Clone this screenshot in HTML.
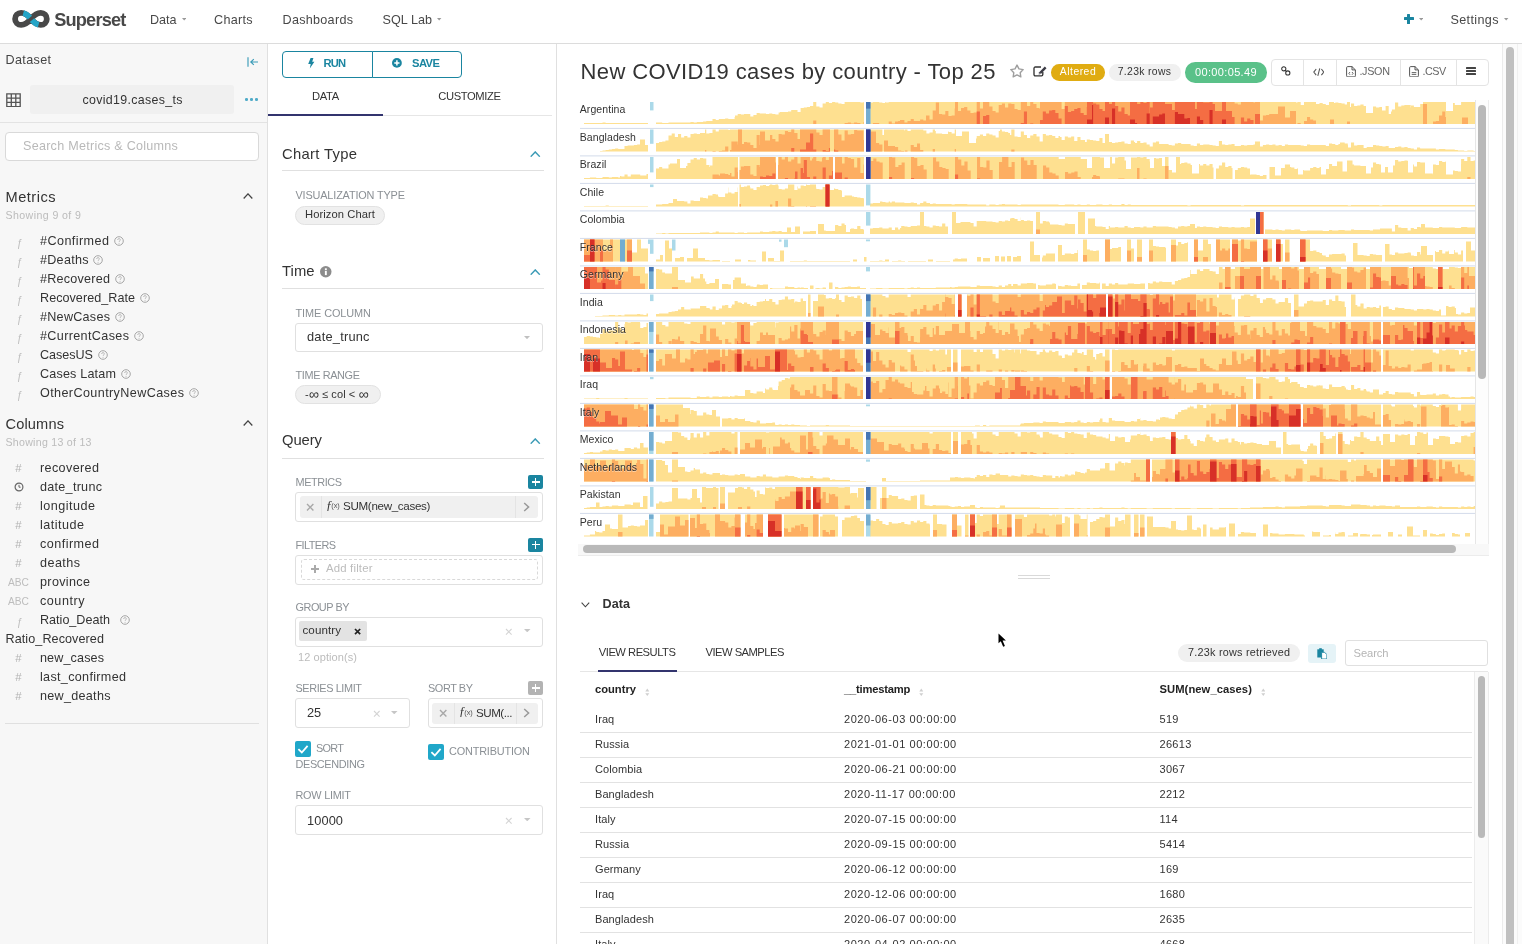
<!DOCTYPE html>
<html lang="en"><head><meta charset="utf-8"><title>Explore - New COVID19 cases by country - Top 25</title><style>
*{box-sizing:border-box;margin:0;padding:0}
html,body{width:1522px;height:944px;overflow:hidden;background:#fff}
body{font-family:"Liberation Sans",sans-serif;position:relative;color:#333}
#bg{position:absolute;left:0;top:0;width:1522px;height:944px}
#root{position:absolute;left:0;top:0;width:1522px;height:944px;opacity:.999;will-change:opacity}
.b{position:absolute;display:block}
.t{position:absolute;display:block;line-height:1;white-space:pre}
.lbl{text-shadow:0 1px 0 rgba(255,255,255,.5)}
</style></head><body><div id="bg">
<div class="b" style="left:0.00px;top:0.00px;width:1522.00px;height:43.00px;background:#fff"></div>
<div class="b" style="left:0.00px;top:43.00px;width:1522.00px;height:1.00px;background:#dcdcdc"></div>
<svg class="b" style="left:11.90px;top:9.90px;" width="37.90" height="17.80" viewBox="0 0 37.9 17.8"><path d="M18.950 8.900C15.500 4.700 12.500 2.900 9.100 2.900A6 6 0 1 0 9.100 14.900C12.500 14.900 15.500 13.100 18.950 8.900C22.400 4.700 25.400 2.900 28.800 2.900A6 6 0 1 1 28.800 14.900C25.400 14.900 22.400 13.100 18.950 8.900Z" fill="none" stroke="#484848" stroke-width="5.800"/>
<path d="M11.300 3C13.800 3.700 16 5.400 17.900 7.600" fill="none" stroke="#25a5c7" stroke-width="5.800"/>
<path d="M20 10.200C21.900 12.400 24.100 14.100 26.600 14.800" fill="none" stroke="#25a5c7" stroke-width="5.800"/></svg>
<svg class="b" style="left:182.00px;top:18.20px;" width="4.40" height="2.40" viewBox="0 0 4.4 2.4"><path d="M0 0H4.4 L2.2 2.4 Z" fill="#999"/></svg>
<svg class="b" style="left:437.40px;top:18.20px;" width="4.40" height="2.40" viewBox="0 0 4.4 2.4"><path d="M0 0H4.4 L2.2 2.4 Z" fill="#999"/></svg>
<svg class="b" style="left:1419.00px;top:18.20px;" width="4.40" height="2.40" viewBox="0 0 4.4 2.4"><path d="M0 0H4.4 L2.2 2.4 Z" fill="#999"/></svg>
<svg class="b" style="left:1504.20px;top:18.20px;" width="4.40" height="2.40" viewBox="0 0 4.4 2.4"><path d="M0 0H4.4 L2.2 2.4 Z" fill="#999"/></svg>
<div class="b" style="left:1404.00px;top:17.40px;width:9.80px;height:3.00px;background:#1a85a0;border-radius:.5px"></div>
<div class="b" style="left:1407.40px;top:14.00px;width:3.00px;height:9.80px;background:#1a85a0;border-radius:.5px"></div>
<div class="b" style="left:0.00px;top:44.00px;width:267.00px;height:900.00px;background:#f7f7f7"></div>
<div class="b" style="left:267.00px;top:44.00px;width:1.00px;height:900.00px;background:#e0e0e0"></div>
<svg class="b" style="left:246.60px;top:57.00px;" width="12.00" height="10.00" viewBox="0 0 12 10"><path d="M1 .3v9.400M3.800 5h7.200M6.800 2.200L3.800 5l3 2.800" fill="none" stroke="#3b9cb8" stroke-width="1.150"/></svg>
<svg class="b" style="left:6.00px;top:92.50px;" width="15.00" height="14.50" viewBox="0 0 15 14.5"><path d="M.8 .8h13.400v12.900H.8zM.8 5.100h13.400M.8 9.400h13.400M5.300 .8v12.900M9.800 .8v12.900" fill="none" stroke="#555" stroke-width="1.300"/></svg>
<div class="b" style="left:30.00px;top:85.00px;width:204.00px;height:29.00px;background:#f0f0f0;border-radius:3px"></div>
<div class="b" style="left:245.20px;top:98.30px;width:2.50px;height:2.50px;background:#4fabc8;border-radius:1.3px"></div>
<div class="b" style="left:250.20px;top:98.30px;width:2.50px;height:2.50px;background:#4fabc8;border-radius:1.3px"></div>
<div class="b" style="left:255.20px;top:98.30px;width:2.50px;height:2.50px;background:#4fabc8;border-radius:1.3px"></div>
<div class="b" style="left:0.00px;top:122.00px;width:267.00px;height:1.00px;background:#e3e3e3"></div>
<div class="b" style="left:5.30px;top:132.00px;width:254.20px;height:28.70px;background:#fff;border:1px solid #d9d9d9;border-radius:4px"></div>
<svg class="b" style="left:242.50px;top:193.00px;" width="10.00" height="6.00" viewBox="0 0 10 6"><path d="M.7 5.5 L5 .9 L9.3 5.5" fill="none" stroke="#444" stroke-width="1.3"/></svg>
<svg class="b" style="left:113.50px;top:236.10px;" width="10.00" height="10.00" viewBox="0 0 10 10"><circle cx="5" cy="5" r="4.300" fill="none" stroke="#a6a6a6" stroke-width="1"/><path d="M3.600 4c0-.9.600-1.400 1.400-1.400s1.400.5 1.400 1.200c0 1-1.300 1-1.300 2.100" fill="none" stroke="#b5b5b5" stroke-width=".9"/><circle cx="5.050" cy="7.300" r=".55" fill="#b5b5b5"/></svg>
<svg class="b" style="left:93.00px;top:255.10px;" width="10.00" height="10.00" viewBox="0 0 10 10"><circle cx="5" cy="5" r="4.300" fill="none" stroke="#a6a6a6" stroke-width="1"/><path d="M3.600 4c0-.9.600-1.400 1.400-1.400s1.400.5 1.400 1.200c0 1-1.300 1-1.300 2.100" fill="none" stroke="#b5b5b5" stroke-width=".9"/><circle cx="5.050" cy="7.300" r=".55" fill="#b5b5b5"/></svg>
<svg class="b" style="left:114.50px;top:274.10px;" width="10.00" height="10.00" viewBox="0 0 10 10"><circle cx="5" cy="5" r="4.300" fill="none" stroke="#a6a6a6" stroke-width="1"/><path d="M3.600 4c0-.9.600-1.400 1.400-1.400s1.400.5 1.400 1.200c0 1-1.300 1-1.300 2.100" fill="none" stroke="#b5b5b5" stroke-width=".9"/><circle cx="5.050" cy="7.300" r=".55" fill="#b5b5b5"/></svg>
<svg class="b" style="left:139.50px;top:293.10px;" width="10.00" height="10.00" viewBox="0 0 10 10"><circle cx="5" cy="5" r="4.300" fill="none" stroke="#a6a6a6" stroke-width="1"/><path d="M3.600 4c0-.9.600-1.400 1.400-1.400s1.400.5 1.400 1.200c0 1-1.300 1-1.300 2.100" fill="none" stroke="#b5b5b5" stroke-width=".9"/><circle cx="5.050" cy="7.300" r=".55" fill="#b5b5b5"/></svg>
<svg class="b" style="left:114.50px;top:312.10px;" width="10.00" height="10.00" viewBox="0 0 10 10"><circle cx="5" cy="5" r="4.300" fill="none" stroke="#a6a6a6" stroke-width="1"/><path d="M3.600 4c0-.9.600-1.400 1.400-1.400s1.400.5 1.400 1.200c0 1-1.300 1-1.300 2.100" fill="none" stroke="#b5b5b5" stroke-width=".9"/><circle cx="5.050" cy="7.300" r=".55" fill="#b5b5b5"/></svg>
<svg class="b" style="left:133.50px;top:331.10px;" width="10.00" height="10.00" viewBox="0 0 10 10"><circle cx="5" cy="5" r="4.300" fill="none" stroke="#a6a6a6" stroke-width="1"/><path d="M3.600 4c0-.9.600-1.400 1.400-1.400s1.400.5 1.400 1.200c0 1-1.300 1-1.300 2.100" fill="none" stroke="#b5b5b5" stroke-width=".9"/><circle cx="5.050" cy="7.300" r=".55" fill="#b5b5b5"/></svg>
<svg class="b" style="left:97.50px;top:350.10px;" width="10.00" height="10.00" viewBox="0 0 10 10"><circle cx="5" cy="5" r="4.300" fill="none" stroke="#a6a6a6" stroke-width="1"/><path d="M3.600 4c0-.9.600-1.400 1.400-1.400s1.400.5 1.400 1.200c0 1-1.300 1-1.300 2.100" fill="none" stroke="#b5b5b5" stroke-width=".9"/><circle cx="5.050" cy="7.300" r=".55" fill="#b5b5b5"/></svg>
<svg class="b" style="left:120.50px;top:369.10px;" width="10.00" height="10.00" viewBox="0 0 10 10"><circle cx="5" cy="5" r="4.300" fill="none" stroke="#a6a6a6" stroke-width="1"/><path d="M3.600 4c0-.9.600-1.400 1.400-1.400s1.400.5 1.400 1.200c0 1-1.300 1-1.300 2.100" fill="none" stroke="#b5b5b5" stroke-width=".9"/><circle cx="5.050" cy="7.300" r=".55" fill="#b5b5b5"/></svg>
<svg class="b" style="left:188.50px;top:388.10px;" width="10.00" height="10.00" viewBox="0 0 10 10"><circle cx="5" cy="5" r="4.300" fill="none" stroke="#a6a6a6" stroke-width="1"/><path d="M3.600 4c0-.9.600-1.400 1.400-1.400s1.400.5 1.400 1.200c0 1-1.300 1-1.300 2.100" fill="none" stroke="#b5b5b5" stroke-width=".9"/><circle cx="5.050" cy="7.300" r=".55" fill="#b5b5b5"/></svg>
<svg class="b" style="left:242.50px;top:420.00px;" width="10.00" height="6.00" viewBox="0 0 10 6"><path d="M.7 5.5 L5 .9 L9.3 5.5" fill="none" stroke="#444" stroke-width="1.3"/></svg>
<svg class="b" style="left:13.50px;top:482.30px;" width="10.00" height="10.00" viewBox="0 0 10 10"><circle cx="5" cy="5" r="3.900" fill="none" stroke="#666" stroke-width="1.200"/><path d="M5 2.800V5.200H6.600" fill="none" stroke="#666" stroke-width="1"/></svg>
<svg class="b" style="left:119.50px;top:615.30px;" width="10.00" height="10.00" viewBox="0 0 10 10"><circle cx="5" cy="5" r="4.300" fill="none" stroke="#a6a6a6" stroke-width="1"/><path d="M3.600 4c0-.9.600-1.400 1.400-1.400s1.400.5 1.400 1.200c0 1-1.300 1-1.300 2.100" fill="none" stroke="#b5b5b5" stroke-width=".9"/><circle cx="5.050" cy="7.300" r=".55" fill="#b5b5b5"/></svg>
<div class="b" style="left:5.00px;top:722.50px;width:254.00px;height:1.00px;background:#e0e0e0"></div>
<div class="b" style="left:556.00px;top:44.00px;width:1.00px;height:900.00px;background:#e0e0e0"></div>
<div class="b" style="left:282.00px;top:51.00px;width:90.50px;height:27.00px;border:1px solid #1a85a0;border-radius:4px 0 0 4px;background:#fff"></div>
<div class="b" style="left:371.50px;top:51.00px;width:90.50px;height:27.00px;border:1px solid #1a85a0;border-radius:0 4px 4px 0;background:#fff"></div>
<svg class="b" style="left:308.00px;top:58.00px;" width="6.50" height="10.50" viewBox="0 0 6.5 10.5"><path d="M2.600 0H5.400L4.200 3.700H6.400L1.800 10.500 2.700 5.900H.2z" fill="#1a85a0"/></svg>
<svg class="b" style="left:392.40px;top:58.20px;" width="9.80" height="9.80" viewBox="0 0 9.8 9.8"><circle cx="4.900" cy="4.900" r="4.900" fill="#1a85a0"/><path d="M4.900 2.300v5.200M2.300 4.900h5.200" stroke="#fff" stroke-width="1.500"/></svg>
<div class="b" style="left:268.00px;top:115.00px;width:284.00px;height:1.00px;background:#e6e6e6"></div>
<div class="b" style="left:268.00px;top:114.00px;width:114.50px;height:2.00px;background:#32346e"></div>
<svg class="b" style="left:530.00px;top:151.20px;" width="10.50" height="6.20" viewBox="0 0 10.5 6.2"><path d="M.7 5.7 L5.25 .9 L9.8 5.7" fill="none" stroke="#3a9ab5" stroke-width="1.4"/></svg>
<div class="b" style="left:282.00px;top:170.00px;width:262.00px;height:1.00px;background:#e0e0e0"></div>
<svg class="b" style="left:530.00px;top:268.70px;" width="10.50" height="6.20" viewBox="0 0 10.5 6.2"><path d="M.7 5.7 L5.25 .9 L9.8 5.7" fill="none" stroke="#3a9ab5" stroke-width="1.4"/></svg>
<div class="b" style="left:282.00px;top:287.50px;width:262.00px;height:1.00px;background:#e0e0e0"></div>
<svg class="b" style="left:530.00px;top:437.70px;" width="10.50" height="6.20" viewBox="0 0 10.5 6.2"><path d="M.7 5.7 L5.25 .9 L9.8 5.7" fill="none" stroke="#3a9ab5" stroke-width="1.4"/></svg>
<div class="b" style="left:282.00px;top:457.50px;width:262.00px;height:1.00px;background:#e0e0e0"></div>
<svg class="b" style="left:320.00px;top:266.00px;" width="11.50" height="11.50" viewBox="0 0 11.5 11.5"><circle cx="5.750" cy="5.750" r="5.750" fill="#8c8c8c"/><rect x="4.900" y="4.800" width="1.900" height="4.300" fill="#fff"/><rect x="4.900" y="2.300" width="1.900" height="1.700" fill="#fff"/></svg>
<div class="b" style="left:295.00px;top:205.50px;width:89.50px;height:19.00px;background:#f0f0f0;border:1px solid #e2e2e2;border-radius:9.5px"></div>
<div class="b" style="left:295.00px;top:323.00px;width:248.00px;height:28.50px;background:#fff;border:1px solid #e0e0e0;border-radius:3px"></div>
<svg class="b" style="left:523.50px;top:335.50px;" width="6.00" height="3.20" viewBox="0 0 6 3.2"><path d="M0 0H6 L3 3.2 Z" fill="#c0c0c0"/></svg>
<div class="b" style="left:295.00px;top:385.00px;width:86.00px;height:19.00px;background:#f0f0f0;border:1px solid #e2e2e2;border-radius:9.5px"></div>
<div class="b" style="left:528.00px;top:475.00px;width:15.00px;height:14.00px;background:#1a85a0;border-radius:2px"></div>
<div class="b" style="left:531.50px;top:481.30px;width:8.00px;height:1.40px;background:#fff"></div>
<div class="b" style="left:534.80px;top:478.00px;width:1.40px;height:8.00px;background:#fff"></div>
<div class="b" style="left:295.00px;top:491.50px;width:248.00px;height:30.00px;background:#fff;border:1px solid #e0e0e0;border-radius:3px"></div>
<div class="b" style="left:300.00px;top:496.00px;width:237.50px;height:21.50px;background:#f0f0f0;border-radius:3px"></div>
<div class="b" style="left:321.00px;top:496.00px;width:1.00px;height:21.50px;background:#e4e4e4"></div>
<div class="b" style="left:515.00px;top:496.00px;width:1.00px;height:21.50px;background:#e4e4e4"></div>
<svg class="b" style="left:306.30px;top:502.80px;" width="8.40" height="8.40" viewBox="0 0 8.4 8.4"><path d="M1 1L7.4 7.4M7.4 1L1 7.4" stroke="#a8a8a8" stroke-width="1.4" fill="none"/></svg>
<svg class="b" style="left:523.00px;top:502.00px;" width="7.00" height="10.00" viewBox="0 0 7 10"><path d="M1.200 1L5.600 5 1.200 9" fill="none" stroke="#999" stroke-width="1.500"/></svg>
<div class="b" style="left:528.00px;top:537.50px;width:15.00px;height:14.00px;background:#1a85a0;border-radius:2px"></div>
<div class="b" style="left:531.50px;top:543.80px;width:8.00px;height:1.40px;background:#fff"></div>
<div class="b" style="left:534.80px;top:540.50px;width:1.40px;height:8.00px;background:#fff"></div>
<div class="b" style="left:295.00px;top:554.50px;width:248.00px;height:30.00px;background:#fff;border:1px solid #e0e0e0;border-radius:3px"></div>
<div class="b" style="left:300.50px;top:559.00px;width:237.00px;height:20.50px;border:1px dashed #d9d9d9;border-radius:3px"></div>
<div class="b" style="left:311.00px;top:568.30px;width:8.00px;height:1.40px;background:#aaa"></div>
<div class="b" style="left:314.30px;top:565.00px;width:1.40px;height:8.00px;background:#aaa"></div>
<div class="b" style="left:295.00px;top:616.50px;width:248.00px;height:30.00px;background:#fff;border:1px solid #e0e0e0;border-radius:3px"></div>
<div class="b" style="left:299.00px;top:621.00px;width:68.00px;height:20.00px;background:#e3e3e3;border-radius:2px"></div>
<svg class="b" style="left:354.20px;top:627.90px;" width="7.20" height="7.20" viewBox="0 0 7.2 7.2"><path d="M1 1L6.2 6.2M6.2 1L1 6.2" stroke="#222" stroke-width="1.7" fill="none"/></svg>
<svg class="b" style="left:504.70px;top:628.00px;" width="7.60" height="7.60" viewBox="0 0 7.6 7.6"><path d="M1 1L6.6 6.6M6.6 1L1 6.6" stroke="#d4d4d4" stroke-width="1.1" fill="none"/></svg>
<svg class="b" style="left:524.00px;top:629.00px;" width="6.50" height="3.30" viewBox="0 0 6.5 3.3"><path d="M0 0H6.5 L3.25 3.3 Z" fill="#c6c6c6"/></svg>
<div class="b" style="left:295.00px;top:697.50px;width:114.50px;height:30.00px;background:#fff;border:1px solid #e0e0e0;border-radius:3px"></div>
<svg class="b" style="left:372.70px;top:709.50px;" width="7.60" height="7.60" viewBox="0 0 7.6 7.6"><path d="M1 1L6.6 6.6M6.6 1L1 6.6" stroke="#d4d4d4" stroke-width="1.1" fill="none"/></svg>
<svg class="b" style="left:391.00px;top:711.00px;" width="6.50" height="3.30" viewBox="0 0 6.5 3.3"><path d="M0 0H6.5 L3.25 3.3 Z" fill="#c6c6c6"/></svg>
<div class="b" style="left:528.00px;top:681.00px;width:15.00px;height:14.00px;background:#b3b3b3;border-radius:2px"></div>
<div class="b" style="left:531.50px;top:687.30px;width:8.00px;height:1.40px;background:#fff"></div>
<div class="b" style="left:534.80px;top:684.00px;width:1.40px;height:8.00px;background:#fff"></div>
<div class="b" style="left:428.00px;top:697.50px;width:115.00px;height:30.00px;background:#fff;border:1px solid #e0e0e0;border-radius:3px"></div>
<div class="b" style="left:432.00px;top:702.50px;width:105.50px;height:21.50px;background:#f0f0f0;border-radius:3px"></div>
<div class="b" style="left:454.00px;top:702.50px;width:1.00px;height:21.50px;background:#e4e4e4"></div>
<div class="b" style="left:515.50px;top:702.50px;width:1.00px;height:21.50px;background:#e4e4e4"></div>
<svg class="b" style="left:438.80px;top:709.10px;" width="8.40" height="8.40" viewBox="0 0 8.4 8.4"><path d="M1 1L7.4 7.4M7.4 1L1 7.4" stroke="#a8a8a8" stroke-width="1.4" fill="none"/></svg>
<svg class="b" style="left:522.50px;top:708.30px;" width="7.00" height="10.00" viewBox="0 0 7 10"><path d="M1.200 1L5.600 5 1.200 9" fill="none" stroke="#999" stroke-width="1.500"/></svg>
<div class="b" style="left:295.00px;top:741.00px;width:16.00px;height:16.00px;background:#20a7c9;border-radius:2px"></div>
<svg class="b" style="left:295.00px;top:741.00px;" width="16.00" height="16.00" viewBox="0 0 16 16"><path d="M3.400 8.200L6.800 11.500 12.600 4.800" fill="none" stroke="#fff" stroke-width="1.800"/></svg>
<div class="b" style="left:428.00px;top:743.70px;width:16.00px;height:16.00px;background:#20a7c9;border-radius:2px"></div>
<svg class="b" style="left:428.00px;top:743.70px;" width="16.00" height="16.00" viewBox="0 0 16 16"><path d="M3.400 8.200L6.800 11.500 12.600 4.800" fill="none" stroke="#fff" stroke-width="1.800"/></svg>
<div class="b" style="left:295.00px;top:804.50px;width:248.00px;height:30.00px;background:#fff;border:1px solid #e0e0e0;border-radius:3px"></div>
<svg class="b" style="left:504.90px;top:816.70px;" width="7.60" height="7.60" viewBox="0 0 7.6 7.6"><path d="M1 1L6.6 6.6M6.6 1L1 6.6" stroke="#d4d4d4" stroke-width="1.1" fill="none"/></svg>
<svg class="b" style="left:524.00px;top:818.00px;" width="6.50" height="3.30" viewBox="0 0 6.5 3.3"><path d="M0 0H6.5 L3.25 3.3 Z" fill="#c6c6c6"/></svg>
<svg class="b" style="left:1009.60px;top:64.20px;" width="14.00" height="14.50" viewBox="0 0 14 14.5"><path d="M7.00 1.10L8.97 4.89L13.18 5.59L10.19 8.64L10.82 12.86L7.00 10.95L3.18 12.86L3.81 8.64L0.82 5.59L5.03 4.89Z" fill="none" stroke="#9e9e9e" stroke-width="1.400" stroke-linejoin="round"/></svg>
<svg class="b" style="left:1032.80px;top:64.50px;" width="14.50" height="12.00" viewBox="0 0 14.5 12"><path d="M9.800 7v2.600a1.300 1.300 0 0 1-1.300 1.300H2.300a1.300 1.300 0 0 1-1.300-1.300V3.300A1.300 1.300 0 0 1 2.300 2h5.700" fill="none" stroke="#333" stroke-width="1.350"/><path d="M6.200 7.300L11.800 1.500l1.700 1.700L7.900 9l-2.300.6z" fill="#3b3b45"/><circle cx="7" cy="8.200" r=".55" fill="#fff"/></svg>
<div class="b" style="left:1051.00px;top:64.00px;width:54.00px;height:16.50px;background:#e0ac12;border:none;border-radius:8.2px"></div>
<div class="b" style="left:1109.00px;top:64.00px;width:71.50px;height:16.50px;background:#f0f0f0;border:none;border-radius:8.2px"></div>
<div class="b" style="left:1185.00px;top:62.00px;width:82.00px;height:20.50px;background:#5ac189;border:none;border-radius:10.2px"></div>
<div class="b" style="left:1270.50px;top:59.20px;width:218.00px;height:26.90px;border:1px solid #e4e4e4;border-radius:4px;background:#fff"></div>
<div class="b" style="left:1303.10px;top:59.80px;width:1.00px;height:25.80px;background:#e4e4e4"></div>
<div class="b" style="left:1336.00px;top:59.80px;width:1.00px;height:25.80px;background:#e4e4e4"></div>
<div class="b" style="left:1399.90px;top:59.80px;width:1.00px;height:25.80px;background:#e4e4e4"></div>
<div class="b" style="left:1455.90px;top:59.80px;width:1.00px;height:25.80px;background:#e4e4e4"></div>
<svg class="b" style="left:1281.00px;top:66.00px;" width="9.60" height="9.80" viewBox="0 0 9.6 9.8"><circle cx="2.800" cy="2.800" r="2.100" fill="none" stroke="#333" stroke-width="1.050"/><circle cx="6.800" cy="7" r="2.100" fill="none" stroke="#333" stroke-width="1.050"/><path d="M4.100 4.200l1.400 1.400" stroke="#333" stroke-width="1.050"/></svg>
<svg class="b" style="left:1312.80px;top:67.60px;" width="11.60" height="8.20" viewBox="0 0 11.6 8.2"><path d="M3.200 1L.8 4.100l2.400 3.100M8.400 1l2.400 3.100-2.400 3.100M6.800 .3L4.800 7.900" fill="none" stroke="#555" stroke-width="1.050"/></svg>
<svg class="b" style="left:1345.80px;top:65.80px;" width="10.00" height="11.50" viewBox="0 0 10 11.5"><path d="M.6 1.700A1.100 1.100 0 0 1 1.700 .6H6l3.400 3.300v5.900a1.100 1.100 0 0 1-1.100 1.100H1.700A1.100 1.100 0 0 1 .6 9.800z" fill="none" stroke="#555" stroke-width="1"/><path d="M6 .6v3.300h3.400" fill="none" stroke="#555" stroke-width="1"/><path d="M4 6L2.900 7.400 4 8.800M6 6l1.100 1.400L6 8.800" fill="none" stroke="#555" stroke-width=".9"/></svg>
<svg class="b" style="left:1409.40px;top:65.80px;" width="10.00" height="11.50" viewBox="0 0 10 11.5"><path d="M.6 1.700A1.100 1.100 0 0 1 1.700 .6H6l3.400 3.300v5.900a1.100 1.100 0 0 1-1.100 1.100H1.700A1.100 1.100 0 0 1 .6 9.800z" fill="none" stroke="#555" stroke-width="1"/><path d="M6 .6v3.300h3.400" fill="none" stroke="#555" stroke-width="1"/><path d="M2.700 6.600h4.600M2.700 8.400h4.600" stroke="#555" stroke-width=".9"/></svg>
<div class="b" style="left:1466.20px;top:67.20px;width:9.80px;height:1.60px;background:#444;border-radius:.5px"></div>
<div class="b" style="left:1466.20px;top:70.30px;width:9.80px;height:1.60px;background:#444;border-radius:.5px"></div>
<div class="b" style="left:1466.20px;top:73.40px;width:9.80px;height:1.60px;background:#444;border-radius:.5px"></div>
<svg class="b" style="left:578px;top:98px;filter:blur(.35px)" width="912" height="460" viewBox="578 98 912 460"><path fill="#fee090" d="M584 124V123H602.5V122.5H605.6V123H648V124ZM656 124V122.5H662.2V123H668.5V122.5H690.5V122H693.7V122.5H696.8V122H700V124ZM700 124V122H703.1V121.5H706.3V121H712.5V119H715.7V120H718.8V119H725.1V118.5H728.3V119H734.6V117H735V115.5H737.7V114H740.9V114.5H744V114H750.3V116.5H753.4V115H756.6V113H759.7V113.5H766V114H769.2V113.5H772.3V114H775.4V114.5H778.6V112.5H780V112H788V111.5H791.2V110H797.5V112H800.6V108H803.8V107.5H806.9V107H810V106H813.2V102H816.3V106.5H819.5V107.5H822.6V103.5H825.8V102H828.9V103H832.1V102H835.2V102.5H838.3V103.5H841.5V104H844.6V102H860.4V102.5H863.5V102H864V124ZM870 124V102.5H872.9V102H879.2V102.5H882.4V103H885V102H885.5V102.5H888.7V102H1222V124ZM1222 124V102H1296V102.5H1297.5V102H1300.7V105H1304V102H1316V104H1319.5V103H1322.7V104H1325.8V105H1329V102H1334V103H1335.3V102.5H1338.4V103H1341.5V103.5H1344.7V104.5H1347V102H1350V107H1351V103.5H1354.1V106H1357.3V105.5H1360.4V104.5H1363.6V106H1366V113H1373V106.5H1376.1V107.5H1379.3V107H1382V110.5H1385.6V106H1388.7V114H1391V111.5H1391.9V109.5H1395V102.5H1398.2V106.5H1401.3V105.5H1404.4V105H1410.7V107.5H1411V105.5H1413.9V107H1420.2V104H1423V102H1446V111H1453V103H1454.8V105H1461.1V102H1475V124Z"/>
<path fill="#fdae61" d="M813.2 124V120.5H816.3V124ZM844.6 124V123H847.8V122.5H850.9V123.5H854.1V122.5H857.2V123H860.4V124ZM863.5 124V122H864V124ZM872.9 124V123H879.2V124ZM888.7 124V121.5H891.8V123.5H895V121.5H898.1V121H900V120H904.4V122.5H907.5V121H910.7V119H913.8V121H920.1V119.5H923.3V120.5H926V115.5H929.5V119.5H932.7V110.5H935.8V102.5H939V114H942.1V114.5H945.3V111H948.4V116H951.6V115.5H954.7V108.5H955V102H958V111H961V108H964.1V107H967.3V110.5H970.4V113H973.6V112.5H976.7V102H979.9V108.5H983V102H989.3V106.5H992.5V111H995.6V112.5H998.7V105H1001.9V103.5H1005V107.5H1008.2V103.5H1011.3V104H1014.5V109H1017.6V110H1020.8V102H1027V106H1030.2V102H1033.3V104H1036.5V108H1039.6V109H1040V102H1061.6V109H1064.8V102H1222V124ZM1222 124V102H1234.6V103.5H1237.8V104.5H1240.9V102H1253.5V102.5H1255V102H1260V120.5H1262.9V115.5H1266.1V115H1269.2V114H1278V106.5H1285V117.5H1290V111H1296V124ZM1297.5 124V123H1300.7V124ZM1304 124V121H1307V117H1310.1V119.5H1313.2V120.5H1316V124ZM1330 124V119.5H1334V124ZM1347 124V121.5H1350V124ZM1423 124V104H1427V124ZM1433 124V121.5H1435.9V121H1439V115.5H1442.2V111.5H1445.3V117H1446V124ZM1462 124V117.5H1468V124Z"/>
<path fill="#f46d43" d="M976.7 124V111.5H979.9V124ZM983 124V116H986.2V115H989.3V124ZM1020.8 124V123H1023.9V111.5H1027V124ZM1030.2 124V123.5H1033.3V124ZM1040 124V120H1042.8V111.5H1045.9V113.5H1049.1V110.5H1052.2V110H1055.3V113H1058.5V118.5H1061.6V124ZM1064.8 124V106H1067.9V112H1071.1V111H1074.2V109H1077.4V108H1080.5V113H1083.7V115H1086.8V107H1087V102H1093.1V103.5H1096.2V104.5H1099.4V109H1102.5V111H1105V102H1109V104H1112V102H1115.1V106H1118.2V111.5H1121.4V107.5H1124.5V114H1127.7V115.5H1130V102H1137.1V104H1140.3V102H1143.4V103H1146.6V102H1149.7V113.5H1150V107.5H1152.8V102H1165V104H1172V110H1174.9V102H1195V109H1196.9V102H1203.2V102.5H1209.5V102H1212.6V104H1215V111H1222V124ZM1222 124V102H1226V111H1232V117H1234.6V124ZM1240.9 124V117.5H1244.1V121.5H1247.2V118.5H1250.3V120H1253.5V124ZM1255 124V114H1260V124Z"/>
<path fill="#d73027" d="M1087 124V119.5H1092V105H1093.1V124ZM1105 124V117.5H1109V124ZM1112 124V108.5H1115.1V124ZM1130 124V119.5H1135V123H1137.1V124ZM1146.6 124V113.5H1149.7V124ZM1152.8 124V116.5H1159.1V114.5H1162.3V113.5H1165V124ZM1174.9 124V112H1178V114H1184.3V118.5H1187.4V118H1190V124ZM1196.9 124V116.5H1200V120H1203.2V124ZM1209.5 124V110H1212.6V124ZM1222 124V119.5H1226V124Z"/>
<rect x="650" y="102" width="3.5" height="8.4" fill="#abd9e9"/>
<rect x="866" y="102" width="4.4" height="22" fill="#abd9e9"/>
<rect x="866" y="102" width="4.4" height="22" fill="#74add1"/>
<rect x="866" y="102" width="4.4" height="6.6" fill="#4575b4"/>
<path fill="#fee090" d="M600 151.5V151H602.5V150.5H605.6V150H608.8V149.5H611.9V149H615.1V148.5H618.2V149H624.5V146H627.6V145.5H633.9V145H637.1V144.5H640V139.5H645V145H648V151.5ZM656 151.5V143H659.1V142H662.2V141.5H665.4V140.5H668.5V135.5H671.7V133.5H674.8V137H678V134H681.1V137.5H684.2V136H687.4V137.5H690.5V134H693.7V133.5H696.8V134H700V151.5ZM700 151.5V133H705V129.5H706.3V133.5H709.4V133H712.5V129.5H715.7V131.5H718.8V129.5H728.3V130H730V129.5H810V151.5ZM810 151.5V129.5H864V151.5ZM870 151.5V129.5H882.4V135H884V129.5H895V151.5ZM895 151.5V129.5H904.4V130.5H905V129.5H907.5V131H910.7V129.5H923.3V130.5H926.4V133.5H929.5V132.5H932.7V129.5H935V131H935.8V133.5H942.1V134H948V131H948.4V132H951.6V133.5H954.7V129.5H956V136H962V131.5H969V143H976V138.5H976.7V136H979.9V134.5H983V136H986.2V133.5H989.3V134.5H992.5V135.5H995.6V137.5H998.7V131H1000V129.5H1001.9V131.5H1005V132H1008.2V133H1010V135H1011.3V129.5H1014.5V136.5H1017.6V137H1020.8V131.5H1023.9V135H1027V138H1030V138.5H1030.2V135.5H1033.3V134H1036.5V136.5H1039.6V141.5H1042.8V134H1045.9V135.5H1049.1V135H1052.2V136H1055.3V138H1058.5V136H1060V137H1061.6V140H1064.8V136.5H1067.9V137.5H1071.1V136.5H1074.2V141H1077.4V137H1080.5V140H1085V142H1086.8V139.5H1089.9V140H1093.1V140.5H1096.2V141H1099.4V138H1102.5V143H1105V134H1109V142H1112V143H1115.1V142.5H1118.2V142H1121.4V141.5H1124.5V143.5H1127.7V144H1130.8V140.5H1134V142H1135V143H1137.1V141H1140.3V143H1143.4V142.5H1146.6V144.5H1149.7V146.5H1152.8V142.5H1156V141.5H1159.1V144H1168.6V145H1171.7V145.5H1174.9V143.5H1178V143H1181.2V144H1190.6V145.5H1193.7V146H1196.9V143.5H1200V145H1203.2V144.5H1209.5V145H1212.6V145.5H1215.7V146H1218.9V141H1222V144.5H1225.2V145H1228.3V144.5H1231.5V144H1234.6V146H1240.9V145H1244.1V145.5H1247.2V145H1253.5V144.5H1255V141.5H1260V146.5H1262.9V145H1266.1V144.5H1269.2V145H1272.4V144.5H1275.5V145.5H1278.6V145H1281.8V146H1284.9V144.5H1288.1V145H1300.7V145.5H1303.8V146H1307V144.5H1310.1V145H1325.8V146H1329V143.5H1332.1V144H1335.3V145H1338.4V144H1340V142.5H1344.7V143.5H1347.8V145H1348V147.5H1351V142.5H1354.1V145.5H1357.3V145H1363.6V148H1366.7V147H1373V145H1376.1V145.5H1379.3V146H1382.4V146.5H1385.6V146H1388.7V148H1395V147H1398.2V146.5H1401.3V147.5H1404.4V147H1407.6V148H1410.7V148.5H1413.9V149.5H1417V147.5H1420V148H1420.2V148.5H1435.9V149.5H1439V149H1445.3V149.5H1454.8V150H1457.9V150.5H1464.2V151H1467.3V150.5H1473.6V151H1475V151.5Z"/>
<path fill="#fdae61" d="M705 151.5V150H706.3V151.5ZM712.5 151.5V151H715.7V151.5ZM718.8 151.5V151H722V150.5H725.1V146.5H728.3V151.5ZM730 151.5V150H731.4V141.5H737.7V144.5H738V129.5H742V144H744V142H747.1V142.5H750.3V145H753.4V148H756.6V135H759.7V145H760V131.5H765V140.5H770V135H772.3V139H775.4V141.5H778.6V134H781.7V134.5H784.9V131H788V132H791.2V129.5H794.3V133H797.5V139H800V129.5H810V151.5ZM810 151.5V129.5H816.3V132.5H819.5V135H822.6V129.5H830V151.5ZM834 151.5V129.5H838.3V134.5H841.5V140.5H844.6V130.5H847.8V134.5H850.9V134H854.1V130H857.2V130.5H863.5V140H864V151.5ZM870 151.5V131.5H876V143H879.2V144.5H882.4V151.5ZM884 151.5V140.5H888V146H895V151.5ZM895 151.5V147H898.1V150.5H901.2V151H904.4V151.5ZM905 151.5V150.5H907.5V151.5ZM910.7 151.5V145H913.8V147H917V143.5H920V147H920.1V150H923.3V151.5ZM932.7 151.5V149H935V151.5ZM954.7 151.5V149H956V151.5ZM1011.3 151.5V149.5H1014.5V151.5Z"/>
<path fill="#f46d43" d="M791.2 151.5V148H794.3V151.5ZM800 151.5V149.5H806V142.5H810V151.5ZM810 151.5V133.5H813.2V149.5H816.3V151.5ZM822.6 151.5V150H825.8V151H828.9V148H830V151.5ZM834 151.5V149.5H835.2V150.5H838.3V151.5Z"/>
<rect x="650" y="129.5" width="3.5" height="14.3" fill="#abd9e9"/>
<rect x="866" y="129.5" width="4.4" height="22" fill="#abd9e9"/>
<rect x="866" y="129.5" width="4.4" height="22" fill="#74add1"/>
<rect x="866" y="129.5" width="4.4" height="22" fill="#4575b4"/>
<rect x="866" y="129.5" width="4.4" height="22" fill="#313695"/>
<rect x="580" y="127.9" width="895" height="1" fill="#d3dbea"/>
<path fill="#fee090" d="M584 179V178H589.9V177.5H596.2V178H602.5V177H608.8V177.5H611.9V177H618.2V177.5H620V176H621.3V176.5H624.5V174.5H627.6V176.5H630.8V174.5H640.2V175.5H646.5V174H648V179ZM656 179V168.5H659.1V167H662.2V168.5H668.5V164.5H670V163.5H677V159H680V168H686V166H687.4V163H690.5V159.5H693.7V158H696.8V159.5H700V179ZM700 179V158H703.1V158.5H706.3V165H709.4V167H710V165.5H712.5V157H738V179ZM739.5 179V157H776V179ZM778 179V157H833V179ZM835 179V157H864V179ZM870.5 179V157H1058.7V159H1065V157H1080.7V159H1087V168H1092V157H1100V157.5H1104V168H1110V157H1112V163.5H1115.1V157.5H1118.2V157H1124.5V160.5H1126V169H1131V157.5H1137V157H1140.3V157.5H1143.4V157H1146.6V159H1149.7V161.5H1150V168H1154V158H1156V158.5H1159.1V158H1162V166H1165V157H1168.5V170H1172V172.5H1176V157H1180V164H1181.2V163H1184.3V162.5H1187.4V163.5H1190.6V165H1192V173.5H1199V164H1200V165.5H1203.2V164H1206.3V165.5H1209.5V164H1212.6V167.5H1213.5V179ZM1216 179V168.5H1218.9V165.5H1222V162.5H1225.2V167H1228.3V166H1231.5V168H1232.5V179ZM1235 179V170H1237.8V168H1240.9V167H1244.1V167.5H1247.2V168.5H1250V175H1250.3V174.5H1256.6V175H1259.8V176H1262.9V175H1266.5V179ZM1269.5 179V167H1275V175.5H1281V168H1284.9V164.5H1290V167H1291.2V167.5H1294.4V169H1297.5V168H1298V174.5H1303V170H1303.8V170.5H1310.1V168H1313.2V167H1316.4V168H1319.5V167H1321V174.5H1326V169H1329V164H1332.1V166H1337V161.5H1342.5V171.5H1347V160.5H1352.5V164.5H1354.1V165.5H1360.4V166H1366V173.5H1371V167.5H1373V162.5H1376.1V164H1379.3V164.5H1381V172.5H1385V167H1388V172.5H1393V165.5H1395V160H1398.2V161.5H1401.3V161H1404.4V160.5H1407.6V161H1408V172.5H1413V164.5H1413.9V166.5H1417V162H1420.2V162.5H1425V173.5H1432.8V174.5H1433V164.5H1435.9V165H1439V161H1442.2V162H1445.3V161.5H1446V174.5H1453V170.5H1454.8V171H1457.9V171.5H1461V164H1461.1V159H1464.2V161H1467.3V157H1470.5V161H1473.6V160.5H1475V179Z"/>
<path fill="#fdae61" d="M712.5 179V174.5H718.8V175.5H720V173.5H725.1V174H728.3V175H730V173H731.4V176.5H734.6V167.5H737.7V172H738V179ZM739.5 179V170H740.9V166.5H744V166H750.3V174.5H753.4V176H756.6V165H759.7V167H760V157H775.4V162.5H776V179ZM778 179V165H778.6V157H781.7V159.5H784.9V157H788V161.5H791.2V159.5H794.3V157H797.5V163.5H800.6V157H810V160.5H812V158.5H813.2V157H816.3V161H819.5V161.5H822V158H822.6V157H825.8V160H828.9V157H833V179ZM835 179V157H842V163.5H844.6V157H847.8V158H850.9V159H854.1V167.5H857.2V158H860.4V173H863.5V164.5H864V179ZM870.5 179V161H873.3V158.5H876.4V161.5H879.6V162.5H882.7V179ZM889 179V157H892.1V157.5H895.3V167H898.4V165H901.6V162.5H904.7V179ZM911 179V157H914.1V158H917.3V166H920.4V165H923.6V169.5H926.7V179ZM933 179V157.5H936.1V161.5H939.3V167H942.4V168H945.6V169H948.7V179ZM955 179V157H958.1V159.5H961.3V165.5H964.4V161.5H967.6V170.5H970.7V179ZM977 179V157H980.1V167H983.3V167.5H986.4V160.5H989.6V170H992.7V179ZM999 179V162H1002.1V157H1008.4V167H1011.6V162H1014.7V179ZM1021 179V157.5H1024.1V160.5H1027.3V165H1030.4V160H1033.6V165H1036.7V179ZM1043 179V165.5H1046.1V167.5H1049.3V172.5H1052.4V173.5H1055.6V175.5H1058.7V179ZM1065 179V172H1068.1V173.5H1071.3V172.5H1074.4V171.5H1077.6V177H1080.7V179ZM1092 179V177H1093.1V175H1096.2V176H1099.4V176.5H1100V179ZM1118.2 179V178.5H1124.5V179ZM1137 179V168H1139.5V179ZM1143.4 179V178.5H1146.6V179ZM1165 179V166H1168.5V179ZM1467.3 179V177H1470.5V179Z"/>
<path fill="#f46d43" d="M760 179V176.5H762.9V177H766V175.5H769.2V176H772.3V173.5H775.4V179ZM784.9 179V178H788V179ZM794.3 179V178.5H795V171.5H797.5V179ZM800.6 179V168H803V173H803.8V160H806.9V177H810V179ZM813.2 179V176.5H816.3V179ZM822.6 179V167.5H825.8V179ZM828.9 179V175.5H832.1V171H833V179ZM835 179V172.5H842V179ZM844.6 179V177.5H847.8V179ZM889 179V177H892.1V179ZM911 179V178H914.1V179ZM955 179V174.5H958.1V179ZM977 179V178.5H980.1V179Z"/>
<rect x="650" y="157" width="3.5" height="15.4" fill="#abd9e9"/>
<rect x="866" y="157" width="4.4" height="22" fill="#abd9e9"/>
<rect x="866" y="157" width="4.4" height="22" fill="#74add1"/>
<rect x="866" y="157" width="4.4" height="22" fill="#4575b4"/>
<rect x="866" y="157" width="4.4" height="22" fill="#313695"/>
<rect x="580" y="155.4" width="895" height="1" fill="#d3dbea"/>
<path fill="#fee090" d="M584 206.5V206H605.6V205.5H608.8V206H648V206.5ZM656 206.5V204.5H662.2V204H668.5V203H673V199H677V201H684.2V201.5H687.4V203.5H690.5V200.5H693.7V201H700V206.5ZM700 206.5V197.5H703.1V198H706.3V198.5H708V195.5H712.5V194H715.7V194.5H718V196.5H718.8V197H725.1V193.5H728V187.5H728.3V192.5H731.4V193.5H734.6V192H737.7V187.5H738V206.5ZM739.5 206.5V184.5H740.9V187H744V186.5H747.1V185.5H750V187H750.3V188.5H753.4V190H756.6V187H759.7V187.5H760V185.5H762.9V185H766V186H769.2V185H770V184.5H772.3V185H775.4V184.5H778V185.5H778.6V189H781.7V189.5H784.9V188.5H788V206.5ZM788 206.5V184.5H794.3V190H797.5V186.5H798V188.5H800.6V185.5H803.8V186H806V184.5H806.9V185H810V184.5H816V187.5H816.3V189H819.5V189.5H822.6V187H825.5V184.5H829.5V190H834V188.5H835.2V189H838.3V190H841.5V191H842V197H844.6V195.5H852V196.5H854.1V197H857.2V197.5H860.4V198H863.5V198.5H864V206.5ZM870 206.5V203.5H872.9V203H880V201.5H882.4V202H885.5V202.5H888.7V201.5H890V202.5H891.8V201.5H895V202.5H904.4V203H910.7V202.5H913.8V203H917V204.5H920.1V203H923.3V201.5H926.4V203H930V204H932.7V203.5H935.8V204H951.6V204.5H954.7V204H967.3V204.5H986.2V205.5H989.3V204.5H995.6V205H998.7V204.5H1001.9V204H1005V204.5H1017.6V205H1020.8V204.5H1058.5V205H1064.8V204.5H1074.2V205H1077.4V204.5H1080.5V205H1086.8V204.5H1089.9V205H1096.2V204.5H1102.5V205H1108.8V204.5H1112V205H1121.4V204H1124.5V205H1127.7V204.5H1130.8V205H1187.4V205.5H1190.6V205H1240.9V205.5H1244.1V205H1347.8V205.5H1351V205H1379.3V205.5H1382.4V205H1475V206.5Z"/>
<path fill="#fdae61" d="M739.5 206.5V204H740.9V206.5ZM770 206.5V204.5H772.3V206.5ZM775.4 206.5V201H778V206.5ZM788 206.5V198.5H791.2V206H794.3V206.5ZM806 206.5V206H806.9V206.5ZM810 206.5V206H816V206.5ZM825.5 206.5V184.5H829.5V206.5Z"/>
<path fill="#f46d43" d="M825.5 206.5V184.5H829.5V206.5Z"/>
<path fill="#d73027" d="M825.5 206.5V184.5H829.5V206.5Z"/>
<rect x="650" y="184.5" width="3.5" height="2.6" fill="#abd9e9"/>
<rect x="866" y="184.5" width="4.4" height="20.9" fill="#abd9e9"/>
<rect x="580" y="182.9" width="895" height="1" fill="#d3dbea"/>
<path fill="#fee090" d="M656 234V233.5H662.2V233H665.4V233.5H668.5V233H700V234ZM700 234V232.5H709.4V233H712.5V232.5H715.7V231.5H718.8V232.5H734.6V233H737.7V232.5H744V233H747.1V232.5H760V231.5H762.9V232H769.2V231.5H772.3V231H775.4V231.5H778.6V231H781.7V232H787V227.5H791V232H795V226.5H800V234ZM803 234V231.5H810V231H816V234ZM818 234V224H824V230.5H825.8V231H835V225.5H835.2V225H838.3V226H841.5V223.5H844.6V225H846V232H850V229H850.9V228.5H854.1V229H857.2V226H860.4V229H863.5V230H864V234ZM870 234V228.5H872.9V228H879.2V227.5H882.4V228.5H888.7V227.5H891.8V230H895V227.5H898.1V229.5H900V228H901.2V226H904.4V226.5H907.5V227H910.7V226H917V225.5H920V212H924V226H926.4V226.5H929.5V227.5H932.7V225.5H935.8V226H939V226.5H942.1V223.5H945.3V226.5H948V234ZM952 234V212H956V223H960V222.5H961V222H970.4V223H973.6V226.5H976.7V221H986.2V221.5H992.5V222H995.6V222.5H998.7V221H1001.9V221.5H1005V220.5H1008.2V221H1010V218.5H1011.3V218H1014.5V219H1017.6V221H1020.8V217.5H1021V220H1023.9V221H1027V220.5H1030.2V221H1033V234ZM1036 234V212H1040V223.5H1042.8V221H1045.9V221.5H1049.1V222.5H1050V224.5H1058.5V225H1061.6V225.5H1064.8V223.5H1067.9V224H1075V234ZM1078 234V212H1085V234ZM1088 234V218.5H1095V226H1096.2V226.5H1102.5V227H1105.7V229H1108.8V226H1110V227.5H1115.1V227H1118.2V227.5H1124.5V226H1127.7V227.5H1130.8V228H1134V227H1140.3V227.5H1143.4V226.5H1146.6V227.5H1152.8V226H1156V226.5H1168.6V227H1171.7V227.5H1174.9V228.5H1178V226.5H1181.2V226H1184.3V226.5H1187.4V226H1190V224H1195V228H1196.9V226.5H1200V227H1203.2V226.5H1206.3V227H1212.6V227.5H1215.7V228H1218.9V226.5H1222V227H1228.3V227.5H1231.5V227H1234.6V227.5H1240.9V227H1244.1V227.5H1247.2V227H1250V218.5H1255V234ZM1260 234V212H1263.5V234ZM1265 234V229.5H1272.4V230H1275.5V229.5H1278.6V230H1281.8V230.5H1284.9V229.5H1291.2V230H1294.4V229.5H1300V230.5H1300.7V231H1307V230.5H1322.7V231H1329V230H1332.1V230.5H1338.4V230H1344.7V230.5H1351V229.5H1354.1V230H1369.8V230.5H1373V229.5H1380V228.5H1391.9V231.5H1395V225H1398.2V227.5H1401.3V228H1407.6V230.5H1410.7V228H1413.9V229H1417V227H1420.2V227.5H1421V224H1425V227.5H1432.8V228H1439V227H1442.2V227.5H1454.8V228H1461.1V227H1467.3V227.5H1475V234Z"/>
<path fill="#fdae61" d="M1036 234V229.5H1040V234ZM1260 234V212H1263.5V234Z"/>
<path fill="#f46d43" d="M1260 234V212H1263.5V234Z"/>
<rect x="866" y="212" width="4.4" height="13.6" fill="#abd9e9"/>
<rect x="1256" y="212" width="4" height="22" fill="#abd9e9"/>
<rect x="1256" y="212" width="4" height="22" fill="#74add1"/>
<rect x="1256" y="212" width="4" height="22" fill="#4575b4"/>
<rect x="1256" y="212" width="4" height="22" fill="#313695"/>
<rect x="580" y="210.4" width="895" height="1" fill="#d3dbea"/>
<path fill="#fee090" d="M584 261.5V239.5H620V261.5ZM625 261.5V239.5H632V252.5H637V239.5H641V248.5H648V261.5ZM656 261.5V259.5H660V255H663V261.5ZM665 261.5V240.5H669V248.5H672V261.5ZM675 261.5V258H680V257H684V261.5ZM687 261.5V258H693V248.5H698V258H705V260H709.4V260.5H712.5V260H720V261.5ZM722 261.5V261H730V261.5ZM735 261.5V259.5H741V261.5ZM748 261.5V260H750.3V260.5H756V261.5ZM762 261.5V251.5H766V261.5ZM768 261.5V258H774V261H780V250.5H784V261.5ZM790 261.5V261H803.8V260.5H806.9V261H850V261.5ZM853 261.5V259.5H857V261.5ZM864 261.5V257H866.5V261.5ZM870 261.5V261H879.2V260.5H882.4V261H885V259.5H889V261.5ZM892 261.5V261H898.1V260.5H901.2V261H905V261.5ZM908 261.5V261H926V261.5ZM928 261.5V259.5H933V261.5ZM936 261.5V261H950V261.5ZM953 261.5V259.5H954.7V258.5H957.9V259H961V258.5H967V261.5ZM977 261.5V257H981V261.5ZM983 261.5V258H990V261.5ZM995 261.5V256H999V261.5ZM1001 261.5V256.5H1005V261.5ZM1007 261.5V256H1011V261.5ZM1013 261.5V257H1017V256H1021V261.5ZM1030 261.5V241.5H1034V255H1040V261.5ZM1042 261.5V257.5H1042.8V255.5H1045.9V253.5H1055V261.5ZM1058 261.5V245H1062V255H1064.8V253.5H1071.1V254H1074.2V253H1077.4V250H1078V261.5ZM1083 261.5V239.5H1087V249.5H1089.9V250.5H1093.1V251H1096.2V250.5H1099V261.5ZM1105 261.5V239.5H1110V249H1112V248H1118.2V247H1121V261.5ZM1127 261.5V239.5H1131V248.5H1134V261.5ZM1137 261.5V239.5H1142V261.5ZM1149 261.5V239.5H1153V246H1156V246.5H1159.1V247H1165.4V248H1166V261.5ZM1171 261.5V239.5H1176V245.5H1178V242H1181.2V244H1184.3V243H1187.4V242H1188V261.5ZM1194 261.5V239.5H1198V250.5H1203V239.5H1208V244H1211V261.5ZM1216 261.5V239.5H1230V261.5ZM1232 261.5V239.5H1238V240.5H1240.9V239.5H1257V261.5ZM1263 261.5V239.5H1272V261.5ZM1276 261.5V239.5H1280.5V244H1283V261.5ZM1285 261.5V239.5H1289.5V261.5ZM1300 261.5V239.5H1310V248.5H1310.1V251H1313.2V250.5H1316.4V252H1319.5V253H1322V255H1322.7V255.5H1325.8V257H1329V254.5H1332.1V254H1341.5V253.5H1344.7V255.5H1346V261.5ZM1353 261.5V243H1357.5V255H1363.6V255.5H1366.7V256H1369.8V254H1373V254.5H1376.1V255H1382V261.5ZM1385 261.5V244H1389.5V254.5H1391.9V255H1395V252.5H1398.2V253.5H1404.4V253H1407.6V252.5H1410.7V253.5H1411V255.5H1413.9V256H1417V252H1420.2V254.5H1421V246H1427V255H1433V261.5ZM1435 261.5V251H1435.9V252H1439V250H1442.2V253.5H1445.3V251.5H1448.5V250.5H1449V254H1454V250H1454.8V252.5H1457.9V254.5H1461.1V250.5H1463V261.5ZM1466 261.5V241.5H1471V250.5H1475V261.5Z"/>
<path fill="#fdae61" d="M584 261.5V239.5H603V250.5H610V239.5H613V261.5ZM627 261.5V239.5H632V261.5ZM1083 261.5V255H1087V261.5ZM1105 261.5V239.5H1110V261.5ZM1127 261.5V250.5H1131V261.5ZM1137 261.5V257H1142V261.5ZM1149 261.5V250.5H1153V261.5ZM1171 261.5V245H1176V261.5ZM1194 261.5V239.5H1198V261.5ZM1203 261.5V257H1208V261.5ZM1216 261.5V239.5H1220V250.5H1222V248.5H1225.2V250.5H1228.3V248.5H1230V261.5ZM1232 261.5V239.5H1238V261.5ZM1240.9 261.5V239.5H1244.1V248.5H1247.2V249H1250V241.5H1257V261.5ZM1263 261.5V239.5H1267.5V248.5H1272V261.5ZM1276 261.5V239.5H1280.5V261.5ZM1285 261.5V252.5H1289.5V261.5ZM1300 261.5V239.5H1305.5V261.5Z"/>
<path fill="#f46d43" d="M584 261.5V255H590V239.5H594.5V261.5ZM600 261.5V250.5H603V261.5ZM627 261.5V250.5H632V261.5ZM1194 261.5V257H1198V261.5ZM1232 261.5V244H1238V261.5ZM1240.9 261.5V261H1244.1V261.5ZM1263 261.5V239.5H1267.5V261.5ZM1276 261.5V239.5H1280.5V261.5ZM1300 261.5V239.5H1305.5V261.5Z"/>
<path fill="#d73027" d="M590 261.5V239.5H594.5V261.5ZM1263 261.5V250.5H1267.5V261.5ZM1276 261.5V244H1280.5V261.5ZM1300 261.5V257H1305.5V261.5Z"/>
<rect x="620" y="239.5" width="5" height="22" fill="#abd9e9"/>
<rect x="620" y="239.5" width="5" height="22" fill="#74add1"/>
<rect x="648" y="239.5" width="2" height="4.4" fill="#abd9e9"/>
<rect x="650" y="239.5" width="3.5" height="14.3" fill="#abd9e9"/>
<rect x="672" y="239.5" width="3.5" height="11" fill="#abd9e9"/>
<rect x="779" y="239.5" width="2.5" height="2.2" fill="#abd9e9"/>
<rect x="784" y="239.5" width="4" height="7.7" fill="#abd9e9"/>
<rect x="866" y="239.5" width="4" height="1.8" fill="#abd9e9"/>
<rect x="580" y="237.9" width="895" height="1" fill="#d3dbea"/>
<path fill="#fee090" d="M584 289V267H645V273.5H648V289ZM656 289V269H659.1V269.5H662.2V272.5H665V273.5H672V267H678V289ZM678 289V280H685V282.5H691V276.5H693.7V278.5H700V274H703.1V278.5H705V281.5H706.3V284H709.4V283H715V279H719V289ZM722 289V284H728.3V284.5H731V289ZM733 289V280H734.6V277.5H740.9V278H741V283.5H746V286H747.1V285.5H750.3V286.5H753.4V287H756.6V285.5H757V284.5H759.7V285H762.9V284.5H768V289ZM770 289V288H772.3V288.5H785V286.5H788V287H794.3V288H797.5V287.5H800V288H800.6V287.5H803.8V288H808V289ZM810 289V285.5H813.5V289ZM815 289V288.5H816.3V288H819.5V288.5H822.6V287.5H825.8V288H826V289ZM829 289V282.5H832.5V289ZM835 289V286.5H835.2V287H838.3V288H841.5V287.5H844.6V287H847.8V286.5H850.9V287H857.2V286.5H860V288H866V289ZM870 289V288.5H876.1V288H882.4V288.5H888.7V288H904.4V288.5H907.5V288H910.7V287.5H913.8V288H917V287.5H920.1V288H935.8V287.5H950V287H951.6V287.5H954.7V287H957.9V286.5H970.4V287H976.7V285.5H979.9V286H992.5V286.5H995.6V287H998.7V285.5H1001.9V287H1005V285.5H1008.2V284H1011.3V286H1013V284H1017.6V285.5H1020.8V283.5H1027V283H1033.3V283.5H1036V289ZM1038 289V285H1039.6V285.5H1045.9V284.5H1052.2V283.5H1055.3V284H1056V289ZM1058 289V285.5H1058.5V286H1061.6V286.5H1064.8V285H1067.9V285.5H1071.1V286H1077.4V283.5H1080V289ZM1082 289V285H1086.8V282.5H1089.9V283H1096.2V283.5H1099.4V282.5H1100V289ZM1102 289V283.5H1105.7V286H1108.8V283.5H1112V284.5H1115.1V283H1118.2V284.5H1127.7V283.5H1134V284H1140.3V283.5H1145V289ZM1148 289V283H1149.7V283.5H1152.8V281.5H1156V282.5H1159.1V281.5H1162.3V282H1171.7V284.5H1174.9V281H1178V280H1181.2V278.5H1184.3V278H1187.4V277H1190V270H1190.6V274H1196.9V269.5H1200V271H1203.2V269H1209.5V271H1212.6V271.5H1215.7V274H1218.9V269H1219V267H1222.5V269H1225V267H1230.5V269H1235V267H1261V269H1263.5V267H1279V269H1282V267H1299V269H1304V267H1319V269H1326V267H1341V269H1347V267H1366V269H1370V267H1409V268H1413V267H1432.8V268.5H1435.9V269H1438V267H1442.5V269H1449V267H1454.8V267.5H1457.9V268H1461V267H1475V289Z"/>
<path fill="#fdae61" d="M584 289V267H615V276.5H615.1V267H621.3V276.5H623V271.5H628V267H633V276H640V283.5H645V289ZM672 289V287H678V289ZM1219 289V282.5H1222.5V289ZM1225 289V267H1230.5V289ZM1235 289V276H1240V267H1244V269H1250V267H1261V289ZM1263.5 289V267H1270V279.5H1272.4V275.5H1275.5V280.5H1278.6V281.5H1279V289ZM1282 289V267H1291.2V268.5H1294.4V267H1297.5V270.5H1299V289ZM1304 289V267H1310.1V273H1313.2V271.5H1316.4V274H1319V289ZM1326 289V267H1331V268.5H1332.1V272.5H1335.3V273.5H1338.4V274H1341V289ZM1347 289V267H1352V267.5H1354.1V271.5H1357.3V272.5H1360.4V270H1363.6V267.5H1366V289ZM1370 289V267H1381V281H1382.4V280.5H1385.6V281H1388.7V285.5H1391V267H1407.6V278H1409V289ZM1413 289V267H1425V286H1426.5V286.5H1429.6V287H1432.8V289ZM1438 289V267H1442.5V289ZM1449 289V285.5H1451.6V288H1454.8V289ZM1461 289V267.5H1461.1V267H1464.2V273H1467.3V267H1469V276H1475V289Z"/>
<path fill="#f46d43" d="M584 289V267H597V282.5H601V280.5H602.5V267H605.6V269.5H608.8V271H609V280H615V289ZM615.1 289V284.5H618.2V280H621.3V289ZM1225 289V287H1230.5V289ZM1240 289V276H1244V289ZM1256 289V276H1261V289ZM1282 289V280H1286V289ZM1288.1 289V288.5H1291.2V289ZM1304 289V282.5H1308V277.5H1310.1V289ZM1326 289V278H1331V289ZM1347 289V282.5H1352V289ZM1370 289V287.5H1373V273.5H1376.1V277H1379.3V277.5H1381V289ZM1391 289V276H1396V284.5H1398.2V285.5H1401.3V284H1404.4V285H1407.6V289ZM1413 289V267H1413.9V285.5H1417V273.5H1420.2V278.5H1423.3V276H1425V289ZM1438 289V267H1442.5V289ZM1461.1 289V277.5H1464.2V289ZM1467.3 289V285.5H1469V289Z"/>
<path fill="#d73027" d="M584 289V278H590V289ZM602.5 289V283H605.6V289ZM1413 289V288.5H1413.9V289ZM1438 289V287H1442.5V289Z"/>
<rect x="649" y="267" width="4.5" height="22" fill="#abd9e9"/>
<rect x="649" y="267" width="4.5" height="22" fill="#74add1"/>
<rect x="649" y="267" width="4.5" height="4.4" fill="#4575b4"/>
<rect x="866" y="267" width="4" height="4.4" fill="#abd9e9"/>
<rect x="580" y="265.4" width="895" height="1" fill="#d3dbea"/>
<path fill="#fee090" d="M595 316.5V316H602.5V315.5H608.8V315H615.1V315.5H618.2V315H621.3V315.5H624.5V314.5H637.1V314H640.2V314.5H643.4V315H646.5V313.5H648V316.5ZM656 316.5V314H659.1V313.5H668.5V312H671.7V311.5H674.8V311H678V309.5H681.1V307H684.2V309.5H690V310H690.5V308.5H700V316.5ZM700 316.5V306H706.3V308H709.4V308.5H710V309.5H712.5V306.5H715.7V310H718.8V308.5H722V316.5ZM722 316.5V305.5H725.1V305H728.3V308H731.4V306H732V304.5H734.6V301H737.7V302.5H740.9V303H742V304H744V302.5H747.1V304H750.3V306H752V305H753.4V306H756.6V302H759.7V301.5H762.9V301H765V299H766V301H769.2V299H772.3V302H775.4V304.5H778.6V300H781.7V299.5H784.9V296.5H788V299.5H791.2V299H794.3V302.5H795V301.5H797.5V302H800.6V298.5H803V301H806V316.5ZM808 316.5V294.5H810.5V316.5ZM813 316.5V301H818V294.5H824V295H825.8V298.5H828.9V298H832.1V299H835.2V298H836V294.5H839V300H841.5V302H844.6V295.5H847.8V297H850.9V296.5H854.1V298H857.2V295.5H860.4V299H862V316.5ZM870 316.5V294.5H882.4V296H885.5V297.5H888.7V294.5H907.5V297H910.7V294.5H955V316.5ZM958 316.5V294.5H961.5V316.5ZM967 316.5V294.5H1106V316.5ZM1108 316.5V294.5H1217V297.5H1218.9V294.5H1231.5V299.5H1234.6V297.5H1235V316.5ZM1238 316.5V299H1240.9V295.5H1244.1V294.5H1250.3V296H1253.5V294.5H1256.6V298H1259.8V300H1260V303H1262.9V299.5H1266.1V298H1272.4V299.5H1275.5V303.5H1278.6V302H1284.9V298H1288.1V303H1291V316.5ZM1294 316.5V294.5H1298.5V306.5H1304V303.5H1307V301H1310.1V300.5H1313.2V301.5H1322.7V300H1325.8V305H1329V299.5H1332.1V301H1335.3V295.5H1338.4V301H1341.5V301.5H1344.7V307H1346V316.5ZM1351 316.5V294.5H1355.5V305H1357.3V306.5H1360.4V303.5H1363.6V308.5H1366.7V307H1369.8V307.5H1373V307H1376.1V308H1379.3V305.5H1381V316.5ZM1383 316.5V307H1385.6V306.5H1388.7V309H1391.9V310H1395V307.5H1398.2V308H1404.4V309H1410.7V309.5H1413.9V310.5H1417V309H1423.3V309.5H1426.5V309H1429.6V309.5H1432.8V310.5H1435.9V311H1439V309.5H1441V315.5H1446V306H1448.5V307H1451.6V306.5H1454.8V308H1456V314H1457.9V314.5H1461.1V312.5H1464.2V313.5H1467.3V313H1470V307.5H1475V316.5Z"/>
<path fill="#fdae61" d="M808 316.5V313H810.5V316.5ZM818 316.5V306.5H824V316.5ZM836 316.5V314.5H839V316.5ZM872.9 316.5V307.5H876.1V316.5ZM879.2 316.5V314.5H882.4V316.5ZM888.7 316.5V314H891.8V315H895V313H898.1V312.5H901.2V313H904.4V315.5H907.5V316.5ZM910.7 316.5V311.5H913.8V309H917V314.5H920V308H920.1V309H923.3V305H926.4V310.5H932.7V305.5H935.8V304H939V310.5H942.1V302H945V294.5H945.3V297H948.4V298H951.6V304H954.7V294.5H955V316.5ZM958 316.5V294.5H961.5V316.5ZM967 316.5V294.5H967.3V296H970.4V294.5H973.6V304.5H976.7V294.5H992.5V301.5H995.6V303H998.7V294.5H1017.6V297H1020.8V294.5H1039.6V301H1042.8V294.5H1106V316.5ZM1108 316.5V294.5H1112.5V298.5H1115.1V294.5H1150V295H1152.8V294.5H1173V300.5H1174.9V294.5H1196V316H1196.9V300H1200V301.5H1203.2V298.5H1206.3V311.5H1209.5V298H1212.6V306H1215.7V307H1217V316.5ZM1218.9 316.5V312.5H1222V315H1225.2V314H1228.3V315H1231.5V316.5ZM1244.1 316.5V316H1250.3V316.5ZM1294 316.5V310H1298.5V316.5Z"/>
<path fill="#f46d43" d="M945 316.5V313.5H945.3V316.5ZM954.7 316.5V315H955V316.5ZM958 316.5V294.5H961.5V316.5ZM967 316.5V314.5H967.3V316.5ZM970.4 316.5V307.5H973.6V316.5ZM976.7 316.5V294.5H979.9V316H986.2V316.5ZM989.3 316.5V314.5H992.5V316.5ZM998.7 316.5V311.5H1001.9V315H1005V311H1010V307.5H1011.3V311.5H1014.5V315.5H1017.6V316.5ZM1020.8 316.5V310H1023.9V314.5H1027V312H1030.2V313H1033.3V309.5H1036.5V307.5H1039.6V316.5ZM1042.8 316.5V310.5H1045V305H1045.9V307H1049.1V305.5H1052.2V302H1057V296.5H1062V313H1064.8V300.5H1071.1V305H1074.2V295.5H1077.4V308.5H1078V299.5H1080.5V303H1083.7V311.5H1086.8V294.5H1093.1V298H1096.2V294.5H1106V316.5ZM1108 316.5V294.5H1112.5V316.5ZM1115.1 316.5V294.5H1118.2V304.5H1121.4V299.5H1124.5V310.5H1125V294.5H1131V299H1138V301H1140.3V294.5H1146.6V309H1149.7V310H1150V316.5ZM1152.8 316.5V298.5H1156V294.5H1159.1V304.5H1160V302H1162.3V304H1165.4V302.5H1168.6V312.5H1170V296.5H1173V316.5ZM1174.9 316.5V315H1181.2V313H1184.3V315.5H1187.4V302.5H1190V310H1196V316.5Z"/>
<path fill="#d73027" d="M958 316.5V310H961.5V316.5ZM976.7 316.5V314.5H979.9V316.5ZM1086.8 316.5V294.5H1088V310H1092V311.5H1093.1V316.5ZM1099.4 316.5V313H1100V307.5H1106V316.5ZM1108 316.5V296.5H1112.5V316.5ZM1115.1 316.5V302H1118.2V316.5ZM1140.3 316.5V316H1143.4V303H1146.6V316.5ZM1156 316.5V315H1159.1V316.5Z"/>
<rect x="650" y="294.5" width="3.5" height="6.6" fill="#abd9e9"/>
<rect x="866" y="294.5" width="4.4" height="22" fill="#abd9e9"/>
<rect x="866" y="294.5" width="4.4" height="22" fill="#74add1"/>
<rect x="866" y="294.5" width="4.4" height="6.6" fill="#4575b4"/>
<rect x="580" y="292.9" width="895" height="1" fill="#d3dbea"/>
<path fill="#fee090" d="M584 344V337H586.7V336H589.9V336.5H593V337H596.2V337.5H599.3V338H600V334H602.5V329H605.6V331.5H608.8V330H611.9V330.5H615V326H615.1V322H618.2V328H621.3V330.5H624.5V324H625V322H627.6V322.5H630.8V322H640V323H640.2V328H643.4V327H646.5V323H648V344ZM656 344V322H662.2V325H665.4V326.5H668.5V322H684.2V323.5H687.4V324H690.5V322H700V344ZM700 344V322H722V324.5H725.1V322H731.4V322.5H734.6V322H750V324H750.3V325.5H753.4V323H756.6V322H775V327.5H775.4V322.5H778.6V322H863V344ZM870 344V322H895V344ZM895 344V322H1381V344ZM1383 344V322H1475V344Z"/>
<path fill="#fdae61" d="M615.1 344V342H618.2V344ZM625 344V340.5H627.6V344ZM630.8 344V343.5H633.9V342H640V344ZM656 344V334.5H659.1V342H662.2V344ZM668.5 344V341H671.7V344ZM672 344V339H674.8V339.5H678V336.5H680V341H684.2V344ZM690.5 344V341H693.7V342H696.8V343H700V344ZM700 344V334H703.1V325.5H706.3V341H709.4V341.5H710V328.5H716V336.5H718.8V340H722V344ZM725.1 344V339H728.3V342.5H731.4V344ZM734.6 344V338.5H737V322H750V344ZM756.6 344V341H759.7V340H760V332.5H762.9V335H766V332.5H768V335H775V344ZM778.6 344V338H781.7V340.5H784.9V339.5H788V338.5H790V326.5H791.2V331.5H794.3V325H797.5V338.5H800V328.5H800.6V322H813V331.5H813.2V334H816.3V336.5H819.5V332H822.6V330.5H825.8V335H826V322H839V339H841.5V341H844.6V330.5H847.8V332H850.9V336H854.1V334H856V331H863V344ZM870 344V324H875V335H880V329.5H882.4V331H885.5V333H888.7V327.5H889V337.5H895V344ZM895 344V322H899.5V328H901.2V327H904.4V333H907.5V335.5H908V341H910.7V336H913.8V342H917V342.5H920V337H920.1V329H923.3V327H926.4V334.5H929.5V337H932.7V328H934V334.5H935.8V326H939V335H945V331H952V324H959V333H965V322H970V331H970.4V337H973.6V339.5H976.7V331H979.9V334H983V333H985V326.5H986.2V322H989.3V325.5H992.5V329H995.6V333H998.7V322H999V330H1001.9V335H1005V332H1008.2V334H1010V323.5H1014.5V329.5H1017.6V336H1019V342H1020.8V334.5H1023.9V329H1027V328H1030V322H1033.3V324.5H1036.5V328.5H1039.6V331H1042.8V323.5H1045.9V324.5H1049.1V326H1050V322H1085V323.5H1086.8V322H1209.5V324H1210V322H1216V325.5H1218.9V322H1234V326H1234.6V332.5H1237.8V335H1240.9V325.5H1244.1V325H1247.2V334.5H1250V339H1250.3V330.5H1253.5V328H1256.6V335H1259.8V337H1262.9V327H1265V329.5H1266.1V333H1269.2V334.5H1272.4V322H1275.5V330.5H1278.6V335.5H1281.8V329H1284.9V333.5H1288.1V335.5H1290V323H1291.2V322H1300V331H1305V336H1307V322H1313.2V326H1316.4V327.5H1322.7V329H1325.8V333H1329V322H1332.1V328.5H1335.3V322.5H1338.4V323.5H1340V322H1345.5V324H1347.8V329H1351V322H1369.8V336H1371V341.5H1373V322H1381V344ZM1383 344V322H1390V325.5H1391.9V325H1395V322H1413.9V325.5H1417V322H1432.8V323H1435.9V322H1475V344Z"/>
<path fill="#f46d43" d="M737 344V341H737.7V343.5H740.9V325H744V341H745V342H750V344ZM800.6 344V330.5H803.8V334H806.9V335H808V342H813V344ZM832 344V339.5H839V344ZM895 344V331H899.5V344ZM998.7 344V343.5H999V344ZM1030 344V342H1030.2V339H1033.3V344ZM1050 344V339H1052.2V332H1055.3V338.5H1058.5V339.5H1061.6V344ZM1064.8 344V332.5H1066V335H1067.9V326H1071.1V339H1077.4V334H1078V323H1085V344ZM1086.8 344V326H1089.9V331.5H1093.1V333H1096.2V332H1099.4V336H1100V322H1102.5V335H1105.7V329H1108.8V322H1109V329H1112V334H1115.1V322H1118.2V326.5H1119V322H1127.7V333H1130.8V322H1133V324H1139V322H1146.6V324H1149.7V322.5H1150V330H1152.8V322H1165.4V325H1166V322H1173V340H1174.9V322H1181.2V323.5H1184.3V324H1187.4V327H1188V322H1194.5V342.5H1196.9V323H1200V322H1203.2V331.5H1206.3V330.5H1209.5V344ZM1210 344V322H1216V344ZM1218.9 344V334.5H1222V338.5H1225.2V338H1226V333.5H1228.3V337.5H1231.5V336H1234V344ZM1272.4 344V340H1275.5V344ZM1291.2 344V342.5H1294.4V339.5H1297.5V340H1300V344ZM1307 344V342.5H1310.1V337H1313.2V344ZM1329 344V343.5H1332.1V344ZM1340 344V322H1345.5V344ZM1351 344V338H1353V331H1357.5V344ZM1363 344V336H1363.6V331H1366.7V343.5H1369.8V344ZM1373 344V339.5H1379.3V340.5H1381V344ZM1383 344V335H1390V344ZM1395 344V335H1398.2V340H1401.3V339.5H1403V325H1404.4V328H1407.6V331H1413V341H1413.9V344ZM1417 344V322H1420.2V338H1423V322H1432.8V344ZM1435.9 344V337.5H1439V324.5H1442.2V332.5H1445V322H1449.5V328.5H1451.6V325.5H1454.8V331.5H1457.9V326H1461.1V322H1464.2V325.5H1465V330H1467.3V331.5H1473.6V335H1475V344Z"/>
<path fill="#d73027" d="M1100 344V337H1102.5V344ZM1108.8 344V330.5H1109V344ZM1115.1 344V337.5H1118.2V344ZM1119 344V330.5H1121.4V331H1124.5V343.5H1127.7V344ZM1130.8 344V335.5H1133V344ZM1139 344V334H1140.3V329H1143.4V322H1146.6V344ZM1152.8 344V336.5H1156V344ZM1159.1 344V343.5H1162.3V337H1165.4V344ZM1166 344V331H1173V344ZM1174.9 344V338.5H1178V322H1181.2V344ZM1188 344V326.5H1194.5V344ZM1200 344V342H1203.2V344ZM1210 344V333H1216V344ZM1417 344V337.5H1420.2V344ZM1423 344V338.5H1426.5V332.5H1429.6V322H1432V335.5H1432.8V344ZM1445 344V337.5H1449.5V344ZM1461.1 344V341.5H1464.2V344Z"/>
<rect x="649" y="322" width="4.5" height="22" fill="#abd9e9"/>
<rect x="649" y="322" width="4.5" height="9.9" fill="#74add1"/>
<rect x="866" y="322" width="4.4" height="22" fill="#abd9e9"/>
<rect x="866" y="322" width="4.4" height="22" fill="#74add1"/>
<rect x="866" y="322" width="4.4" height="22" fill="#4575b4"/>
<rect x="866" y="322" width="4.4" height="15.4" fill="#313695"/>
<rect x="580" y="320.4" width="895" height="1" fill="#d3dbea"/>
<path fill="#fee090" d="M584 371.5V349.5H593V371.5ZM593 371.5V349.5H648V371.5ZM656 371.5V349.5H810V371.5ZM810 371.5V349.5H863V371.5ZM870 371.5V349.5H895V371.5ZM895 371.5V349.5H907.5V352H910.7V349.5H929.5V351H932.7V349.5H935.8V350.5H939V349.5H945.3V354.5H947V349.5H951V371.5ZM953 371.5V349.5H957.5V371.5ZM961 371.5V349.5H973.6V352H976.7V349.5H980V352H983V349.5H992.5V354H995.6V358.5H998.7V349.5H1001.9V350.5H1005V349.5H1008.2V350H1011.3V349.5H1014.5V352.5H1015V349.5H1020V353.5H1020.8V349.5H1027V350.5H1030.2V351H1036.5V354.5H1039.6V352H1042.8V349.5H1045V351.5H1045.9V352.5H1049.1V350.5H1052.2V352H1055.3V351H1058.5V355.5H1061.6V356H1062V358H1064.8V354.5H1067.9V355.5H1072V352.5H1074.2V349.5H1077.4V353H1080.5V353.5H1082V352H1083.7V355H1086.8V349.5H1093.1V357H1095V359.5H1096.2V354H1099.4V353H1102.5V356.5H1105V349.5H1109.5V371.5ZM1112 371.5V349.5H1115.1V350H1118.2V349.5H1172V350.5H1174.9V349.5H1200V371.5ZM1200 371.5V349.5H1222V371.5ZM1222 371.5V349.5H1381V371.5ZM1383 371.5V349.5H1410.7V350.5H1413.9V349.5H1432.8V352.5H1435.9V353.5H1439V349.5H1442.2V350.5H1445.3V350H1446V349.5H1454.8V350H1457.9V350.5H1459V354.5H1461.1V350H1464.2V352H1467.3V349.5H1470.5V351H1473.6V350.5H1475V371.5Z"/>
<path fill="#fdae61" d="M584 371.5V349.5H593V371.5ZM593 371.5V349.5H632V350H633.9V349.5H640.2V353H643.4V357H646.5V349.5H648V371.5ZM656 371.5V361H659.1V359H662.2V365.5H665V354H672V358.5H676V349.5H680V362.5H685V358.5H687.4V359.5H690.5V349.5H693.7V354H695V352H696.8V350H703.1V349.5H706.3V353.5H708V349.5H720V357H722V349.5H725.1V356H728V349.5H731.4V350.5H734.6V349.5H741.5V353.5H744V349.5H794.3V351H795V354.5H797.5V357.5H800.6V357H803.8V349.5H806.9V352.5H810V371.5ZM810 371.5V349.5H813.5V350.5H816.3V354.5H819.5V359.5H822.6V349.5H828.9V350.5H832.1V349.5H840V358.5H841.5V358H844.6V349.5H855V358.5H857.2V363H860.4V365.5H863V371.5ZM870 371.5V351.5H873V361H876.1V352H879.2V360.5H882.4V364.5H885.5V367.5H888.7V360H891.8V362.5H895V371.5ZM900 371.5V365.5H901.2V366.5H904.4V369.5H907.5V371.5ZM910.7 371.5V354.5H913.8V360.5H915V366H917V371H923.3V371.5ZM926 371.5V368.5H926.4V370.5H929.5V371.5ZM932.7 371.5V364.5H935V368.5H935.8V371.5ZM939 371.5V371H942.1V370H945.3V371.5ZM947 371.5V367H951V371.5ZM953 371.5V362.5H957.5V371.5ZM961 371.5V366.5H964.1V366H970.4V370.5H973.6V371.5ZM976.7 371.5V364.5H979.9V371H980V371.5ZM986.2 371.5V370.5H992.5V371.5ZM998.7 371.5V369.5H1001.9V371.5ZM1005 371.5V370.5H1008.2V371.5ZM1011.3 371.5V370H1014.5V371.5ZM1015 371.5V370.5H1020V371.5ZM1020.8 371.5V370.5H1023.9V371H1027V371.5ZM1074.2 371.5V368H1077.4V371.5ZM1086.8 371.5V366H1089.9V371H1093.1V371.5ZM1105 371.5V360.5H1109.5V371.5ZM1112 371.5V371H1115.1V371.5ZM1118.2 371.5V371H1121V362.5H1121.4V362H1124.5V365H1127.7V368H1130.8V360H1134V364.5H1137.1V364H1138V371.5ZM1143 371.5V366H1143.4V363.5H1146.6V368.5H1149.7V371H1152.8V362.5H1156V365H1159.1V364H1162.3V365.5H1165.4V365H1166V357H1172V371.5ZM1174.9 371.5V365H1178V364H1181.2V367H1184.3V366.5H1187.4V368H1196.9V371H1200V371.5ZM1200 371.5V358.5H1204V364H1206.3V366H1209.5V368H1212.6V369.5H1215.7V370.5H1218.9V364H1222V371.5ZM1222 371.5V358.5H1226V365H1232V351.5H1236.5V360.5H1237.8V364H1240.9V353.5H1244.1V360.5H1247.2V359H1250.3V356.5H1253.5V362H1256V349.5H1260.5V362.5H1262.9V349.5H1266.1V355.5H1269.2V356.5H1270V349.5H1278.6V354H1281.8V353H1284.9V349.5H1303.8V350H1307V349.5H1350V354H1351V349.5H1371V362.5H1373V349.5H1376.1V351.5H1379.3V355.5H1381V371.5ZM1383 371.5V365H1385.6V350.5H1388.7V366H1391.9V368.5H1395V366.5H1398.2V368H1401.3V367H1404.4V367.5H1407.6V364.5H1410.7V371.5ZM1413.9 371.5V370.5H1417V369.5H1422V364H1423.3V363.5H1426.5V363H1429.6V362H1432V371H1432.8V371.5ZM1439 371.5V364.5H1442.2V371.5ZM1446 371.5V365H1450V368.5H1454.8V371.5ZM1467.3 371.5V367H1470.5V371.5Z"/>
<path fill="#f46d43" d="M584 371.5V349.5H593V371.5ZM593 371.5V349.5H600V362.5H606V368H612V358H615.1V359.5H618.2V366H620V351.5H625V369.5H632V371.5ZM633.9 371.5V371H637.1V368H640.2V371.5ZM646.5 371.5V354.5H648V371.5ZM690.5 371.5V368H693.7V371.5ZM703.1 371.5V368.5H706.3V371.5ZM708 371.5V362.5H714V360.5H720V371.5ZM722 371.5V364H725.1V371.5ZM728 371.5V371H731.4V371.5ZM734.6 371.5V353.5H737V349.5H741.5V371.5ZM744 371.5V365.5H747.1V361H750V358H750.3V366.5H753.4V369.5H756.6V358.5H758V367H765V356H770V369.5H775V349.5H787V370H788V363.5H791.2V366H794.3V371.5ZM810 371.5V367H813.5V371.5ZM822.6 371.5V363.5H825.8V368H828.9V371.5ZM832.1 371.5V371H835.2V370H836V369.5H840V371.5ZM844.6 371.5V361H847.8V370H850.9V369H854.1V370H855V371.5ZM1256 371.5V349.5H1260.5V371.5ZM1262.9 371.5V369.5H1266.1V371.5ZM1270 371.5V367.5H1272.4V363.5H1275.5V369H1278.6V371.5ZM1284.9 371.5V363H1288.1V369H1291.2V369.5H1294.4V366.5H1296V349.5H1300.5V363.5H1300.7V364.5H1303.8V371.5ZM1307 371.5V349.5H1310.1V362.5H1313.2V358H1316.4V358.5H1319.5V349.5H1325.8V365H1329V350H1330V355H1332.1V357.5H1335.3V367H1338.4V357H1340V349.5H1341.5V354H1344.7V355.5H1347.8V361.5H1350V371.5ZM1351 371.5V367H1357.3V365H1360.4V370H1363.6V349.5H1365V362.5H1371V371.5ZM1373 371.5V370.5H1376.1V371.5Z"/>
<path fill="#d73027" d="M584 371.5V354H590V371.5ZM593 371.5V358.5H600V371.5ZM737 371.5V354H741.5V371.5ZM775 371.5V351.5H780V371.5ZM1296 371.5V365H1300.5V371.5ZM1307 371.5V362.5H1310.1V371.5ZM1319.5 371.5V370.5H1320V364H1322.7V368H1325.8V371.5ZM1340 371.5V370H1341.5V371.5ZM1363.6 371.5V367H1365V371.5Z"/>
<rect x="649" y="349.5" width="4.5" height="22" fill="#abd9e9"/>
<rect x="649" y="349.5" width="4.5" height="22" fill="#74add1"/>
<rect x="649" y="349.5" width="4.5" height="3.3" fill="#4575b4"/>
<rect x="866" y="349.5" width="4.4" height="22" fill="#abd9e9"/>
<rect x="866" y="349.5" width="4.4" height="22" fill="#74add1"/>
<rect x="866" y="349.5" width="4.4" height="22" fill="#4575b4"/>
<rect x="866" y="349.5" width="4.4" height="13.2" fill="#313695"/>
<rect x="580" y="347.9" width="895" height="1" fill="#d3dbea"/>
<path fill="#fee090" d="M584 399V398.5H596.2V398H599.3V398.5H624.5V398H627.6V398.5H648V399ZM656 399V398H665.4V398.5H668.5V397.5H690.5V398H696.8V396.5H700V399ZM700 399V397H706.3V396.5H709.4V397.5H712.5V396.5H718.8V397H722V396.5H728.3V397H730V396H731.4V396.5H734.6V395.5H737.7V396H745V390H750.3V393H753.4V393.5H756.6V391.5H762.9V393H765V388.5H766V389.5H769.2V387.5H772.3V389.5H773V390H778V386H778.6V381.5H781.7V380H784.9V378H788V378.5H790V377H810V399ZM810 399V377H863V399ZM870 399V377H1109.5V399ZM1112 399V377H1246V379H1253V399ZM1256 399V377H1262.9V378H1266.1V378.5H1269.2V377H1275.5V379.5H1278.6V382H1281.8V381.5H1284.9V377H1288.1V379H1290V383H1291.2V382H1297.5V384H1300V387H1303.8V388H1307V385H1310.1V385.5H1313.2V386.5H1316.4V385.5H1319.5V385H1320V385.5H1322.7V388.5H1325.8V389H1329V384.5H1332.1V387H1341.5V386H1344.7V387.5H1346V389.5H1347.8V390H1351V385H1354.1V389H1357.3V388H1360.4V390.5H1363.6V389H1366V390.5H1366.7V391.5H1369.8V392.5H1373V389.5H1379V394.5H1383V393H1385.6V391H1388.7V394H1391.9V394.5H1395V392H1398.2V392.5H1410.7V394H1413.9V396.5H1417V392H1420V394H1420.2V395H1426.5V394.5H1432.8V393.5H1435.9V395.5H1439V394.5H1442.2V394H1445.3V394.5H1448.5V396.5H1450V397.5H1451.6V397H1454.8V397.5H1461.1V397H1470.5V396.5H1473.6V397H1475V399Z"/>
<path fill="#fdae61" d="M790 399V387.5H791.2V384.5H794.3V390H797.5V391.5H800V395.5H805V390H810V399ZM810 399V393.5H813.2V385.5H816.3V396H819.5V397.5H822.6V384H825.8V390.5H828.9V391H832V377H837.5V394.5H838.3V397.5H841.5V399ZM844.6 399V391H845V383.5H850V385.5H850.9V386.5H854.1V387.5H857.2V396H860.4V390H863V399ZM870 399V381.5H872.9V383H876.1V381H879.2V392.5H882.4V389H885.5V380H888.7V377H891.8V381.5H895V379.5H898.1V382.5H900V383.5H904.4V387H907.5V388H910.7V382H912V392H913.8V394H917V394.5H923.3V390.5H925V386H926.4V391H929.5V396.5H932.7V388.5H935.8V385.5H939V388.5H940V393H942.1V391.5H945.3V394H948V382.5H948.4V397H951.6V388.5H954.7V377H958V399ZM961 399V377H964.1V378.5H967.3V377H969V385.5H970.4V398.5H973.6V392.5H976.7V383.5H979.9V390.5H980V385.5H983V382H986.2V380.5H989.3V385H992.5V386H995V377H1001.9V380H1005V388H1008.2V377H1030.2V381H1033.3V377H1039.6V380.5H1042.8V377H1058.5V377.5H1062V382H1064.8V377H1083.7V384.5H1085V377H1093.1V384H1096.2V377H1102.5V379.5H1105V377H1109.5V399ZM1112 399V377H1124.5V378.5H1127.7V384.5H1130.8V377H1146.6V379.5H1152.8V377H1168.6V382.5H1171.7V384.5H1174.9V377H1175V382.5H1178V379H1181.2V390.5H1184.3V384.5H1186V392.5H1193V390H1196.9V383H1200V382.5H1203.2V384.5H1206V392.5H1213V383.5H1219V389.5H1222V395H1225.2V391.5H1228.3V395H1231.5V393H1234.6V398H1236V396H1237.8V397H1240.9V386H1244.1V392.5H1246V399ZM1256 399V383.5H1260.5V399ZM1269.2 399V396H1272.4V399ZM1284.9 399V398.5H1288.1V399Z"/>
<path fill="#f46d43" d="M832 399V394.5H837.5V399ZM888.7 399V398.5H891.8V399ZM954.7 399V398.5H957.9V386H958V399ZM961 399V397H964.1V399ZM967.3 399V393.5H969V399ZM995 399V392.5H1000V388H1001.9V399ZM1008.2 399V398H1010V390H1015V377H1020.5V386H1026V395.5H1027V390.5H1030.2V399ZM1033.3 399V394.5H1036.5V387H1039.6V399ZM1042.8 399V387.5H1045.9V394.5H1049.1V395.5H1052.2V389.5H1055.3V395.5H1058.5V399ZM1064.8 399V395.5H1067.9V398H1070V385.5H1071.1V386.5H1074.2V386H1077.4V387.5H1080.5V392H1083.7V399ZM1085 399V377H1090V392.5H1093.1V399ZM1096.2 399V398.5H1099.4V397.5H1102.5V399ZM1105 399V377H1109.5V399ZM1112 399V396.5H1115.1V396H1118.2V393.5H1121.4V396.5H1124.5V399ZM1130.8 399V398H1131V377H1137.5V399ZM1143 399V391.5H1143.4V391H1146.6V399ZM1152.8 399V387.5H1156V389.5H1159.1V387H1162.3V397H1165.4V390.5H1166V396H1168.6V399ZM1174.9 399V398H1175V399Z"/>
<path fill="#d73027" d="M1105 399V390H1109.5V399Z"/>
<rect x="650" y="377" width="3.5" height="2.2" fill="#abd9e9"/>
<rect x="866" y="377" width="4.4" height="22" fill="#abd9e9"/>
<rect x="866" y="377" width="4.4" height="22" fill="#74add1"/>
<rect x="866" y="377" width="4.4" height="22" fill="#4575b4"/>
<rect x="866" y="377" width="4.4" height="22" fill="#313695"/>
<rect x="580" y="375.4" width="895" height="1" fill="#d3dbea"/>
<path fill="#fee090" d="M584 426.5V404.5H648V426.5ZM656 426.5V404.5H683V408H690V414H690.5V410H693.7V411H696.8V415.5H700V426.5ZM700 426.5V415.5H703.1V412.5H706.3V414.5H709.4V415H712V410H716V416.5H720V426.5ZM722 426.5V418.5H728.3V418H731.4V419.5H734.6V418H737.7V419H744V418.5H745V421H750.3V422H753.4V422.5H756.6V420.5H759.7V421H760V423.5H766V423H772.3V422.5H775V424.5H775.4V425H778.6V424.5H781.7V425H784.9V424.5H788V425H791.2V424.5H794.3V425H800V425.5H806.9V426H810V425.5H825.8V425H828.9V425.5H850V426H975V425.5H979.9V426H983V425H986.2V426H989.3V425.5H1020V424.5H1020.8V423.5H1023.9V423H1033.3V422.5H1039.6V423H1042.8V421.5H1045.9V422H1058.5V423H1064.8V422H1071.1V422.5H1074.2V422H1077.4V420.5H1080.5V422.5H1083.7V423H1086.8V422H1089.9V422.5H1093.1V422H1099.4V420H1100V418.5H1102.5V422H1105.7V422.5H1108.8V418H1112V420.5H1115.1V421H1124.5V422H1130.8V421H1134V421.5H1137.1V419H1140V418H1140.3V420.5H1143.4V420H1146.6V421H1152.8V421.5H1156V419.5H1159.1V420H1160V417.5H1162.3V417H1165.4V417.5H1168.6V418.5H1171.7V419H1174.9V417H1175V414.5H1178V412H1181.2V410H1184.3V409.5H1187.4V407.5H1190V405.5H1190.6V406.5H1193.7V408.5H1196.9V404.5H1200V405H1203.2V408H1206.3V404.5H1209.5V405.5H1211V404.5H1236V426.5ZM1238 426.5V404.5H1300.5V426.5ZM1303 426.5V404.5H1381V426.5ZM1383 426.5V404.5H1391V405.5H1391.9V406.5H1395V404.5H1413V406H1413.9V407.5H1417V404.5H1420.2V405.5H1421V404.5H1426.5V426.5ZM1426.5 426.5V404.5H1432.8V406H1435.9V407H1439V405H1441V404.5H1457.9V410.5H1461V409H1461.1V404.5H1475V426.5Z"/>
<path fill="#fdae61" d="M584 426.5V404.5H634V409H638V404.5H640.2V407H643.4V410.5H646.5V404.5H648V426.5ZM656 426.5V415.5H660V422H665V419H668V422H675V414.5H678.5V426.5ZM1206.3 426.5V420.5H1209.5V426.5ZM1211 426.5V413.5H1215.5V424.5H1215.7V424H1218.9V419H1222V420.5H1225.2V421.5H1226V409H1231V404.5H1236V426.5ZM1238 426.5V404.5H1300.5V426.5ZM1303 426.5V404.5H1323V408.5H1325.8V417.5H1329V405H1331V404.5H1344.7V409H1345V418.5H1347.8V420.5H1351V404.5H1357.3V416.5H1360.4V415.5H1363.6V416H1366.7V417.5H1369.8V418.5H1373V412H1375V424.5H1381V426.5ZM1383 426.5V415H1385.6V414H1388.7V420H1391V426.5ZM1395 426.5V424H1398.2V424.5H1401.3V424H1404V419.5H1404.4V421.5H1407.6V421H1410.7V422H1413V426.5ZM1417 426.5V424H1420.2V426.5ZM1421 426.5V406.5H1426.5V426.5ZM1441 426.5V406H1442.2V405H1445.3V407.5H1448.5V407H1449V425H1451.6V424.5H1454.8V426H1457.9V426.5ZM1461.1 426.5V421H1464.2V423.5H1467.3V422.5H1470.5V421.5H1473.6V422H1475V426.5Z"/>
<path fill="#f46d43" d="M584 426.5V408.5H586.7V407.5H589.9V412H592V416H593V418H596.2V421.5H599.3V423.5H600V422H605V411H611V415.5H618V424.5H622V417.5H627V426.5ZM638 426.5V426H640.2V426.5ZM646.5 426.5V424.5H648V426.5ZM1238 426.5V426H1240.9V414H1244.1V415.5H1247.2V419.5H1250V404.5H1256.6V425H1259.8V410.5H1261V423.5H1262.9V412H1266.1V412.5H1269.2V416.5H1271V404.5H1278.6V409H1281.8V410.5H1284V413.5H1289V404.5H1300.5V426.5ZM1303 426.5V419H1303.8V423H1307V408H1310.1V414H1313.2V407H1316.4V408H1319.5V409.5H1322.7V416H1323V426.5ZM1331 426.5V415.5H1337V425.5H1338.4V423.5H1341.5V424H1344.7V426.5ZM1351 426.5V425.5H1354.1V423.5H1357.3V426.5Z"/>
<path fill="#d73027" d="M1250 426.5V424H1250.3V416H1253.5V416.5H1256.6V426.5ZM1271 426.5V406.5H1276.5V420H1278.6V426.5ZM1289 426.5V415.5H1296V409H1300.5V426.5Z"/>
<rect x="649" y="404.5" width="4.5" height="22" fill="#abd9e9"/>
<rect x="649" y="404.5" width="4.5" height="22" fill="#74add1"/>
<rect x="649" y="404.5" width="4.5" height="4.4" fill="#4575b4"/>
<rect x="866" y="404.5" width="4" height="1.8" fill="#abd9e9"/>
<rect x="580" y="402.9" width="895" height="1" fill="#d3dbea"/>
<path fill="#fee090" d="M584 454V453H586.7V452.5H589.9V452H593V452.5H600V451.5H602.5V450H605.6V450.5H608.8V449.5H611.9V450H615.1V449.5H618.2V451H624.5V448H630.8V449H633.9V447.5H637.1V448.5H640V443H643.5V447.5H648V454ZM656 454V442H659.1V442.5H662.2V443.5H665V441H672V432H678V454ZM678 454V432.5H681.1V436H684.2V437.5H687.4V440H690V438.5H690.5V433H693.7V437.5H696.8V433.5H700V454ZM700 454V437.5H703.1V432H706.3V435.5H709.4V432H731.4V433.5H734.6V432H737.5V454ZM740 454V432H766V432.5H769.2V432H819.5V435.5H822.6V432H863V454ZM870 454V432H929.5V433.5H932.7V432H951V454ZM953 454V432H958V454ZM961 454V432H972V433.5H973.6V438.5H976.7V432H992.5V434.5H995.6V436H998.7V432H1014.5V433.5H1017.6V436.5H1020.8V432H1027V432.5H1030.2V432H1036.5V434.5H1039.6V436H1040V437.5H1042.8V432H1049.1V433.5H1052.2V434.5H1058.5V437H1061.6V438H1064.8V432H1067.9V433H1071.1V432H1074.2V433.5H1077.4V434H1080.5V434.5H1083.7V438H1086.8V432.5H1089.9V432H1090V434.5H1093.1V435H1096.2V436.5H1102.5V437.5H1105.7V438.5H1108.8V434H1110V441H1115V435.5H1115.1V436.5H1118.2V437.5H1121.4V437H1124.5V437.5H1125V442H1130V439.5H1130.8V435.5H1137.1V434H1140V432.5H1140.3V435H1143.4V434.5H1146.6V436H1149.7V437.5H1150V441H1152.8V437.5H1156V438H1159.1V437.5H1162.3V437H1165.4V439H1168.6V439.5H1171V432H1175.5V438H1178V439.5H1181.2V439H1184.3V435H1187.4V439H1190V441H1190.6V443.5H1193.7V446H1196.9V440H1200V441H1203.2V441.5H1205V437.5H1206.3V434.5H1209.5V437H1212.6V440.5H1216V442H1218.9V439.5H1225.2V438.5H1228.3V442.5H1231.5V438.5H1234.6V441H1237.8V442H1240V444.5H1240.9V442H1244.1V443.5H1247.2V443H1250.3V442.5H1253.5V443H1256.6V444H1262V445H1269V441H1276V447.5H1281V454ZM1283 454V432H1286.5V444H1288.1V445H1291.2V444.5H1300V449.5H1300.7V451H1303.8V451.5H1307V449H1308V446H1310.1V443.5H1313.2V445.5H1316.4V446H1317V454ZM1320 454V432H1323.5V436H1325.8V439H1329V438.5H1332.1V436H1335.3V433.5H1336V454ZM1338 454V432H1342.5V441H1344.7V444H1347.8V444.5H1350V440H1351V441H1354.1V436.5H1357.3V437H1360.4V432H1363.6V437.5H1366.7V439H1369.8V441H1376.1V436.5H1379.3V441H1381V445H1383V434H1390V442H1395V434.5H1398.2V435.5H1401.3V434.5H1404.4V435H1407.6V434H1410V445H1415V436H1417V432H1420.2V432.5H1423.3V434H1426.5V432.5H1428V445H1433V438.5H1435.9V439H1439V436H1445.3V436.5H1448.5V437H1450V444H1455V442H1457.9V442.5H1461.1V436H1464.2V435.5H1467.3V436.5H1470.5V433H1473.6V432H1475V454Z"/>
<path fill="#fdae61" d="M672 454V452H678V454ZM703.1 454V453.5H706.3V454ZM709.4 454V452H712V451H712.5V452H715.7V451H718.8V453.5H720V450.5H722V448H725.1V450H728.3V451.5H731.4V454ZM734.6 454V447.5H737.5V454ZM740 454V449.5H745V443H750V447.5H755V439.5H762V448.5H762.9V447H766V454ZM769.2 454V448H770V454ZM773 454V446.5H780V437.5H781.7V439.5H784.9V443.5H788V442.5H790V448H791.2V450.5H794.3V452.5H800V435.5H806V449.5H808V432H812.5V437.5H813.2V446H816.3V449H819.5V454ZM822.6 454V445.5H825.8V443.5H827V435.5H833.5V439.5H838V445H845V438.5H850V449.5H850.9V447H854.1V449H858V452H863V454ZM870 454V438.5H877V442H884V450.5H888.7V444H891.8V445H898.1V443.5H901.2V447.5H904.4V449H905V451H907.5V452H910.7V444H913.8V448.5H915V449.5H922V443H928V448.5H929.5V454ZM932.7 454V449H935.8V444H939V450H942.1V451H945.3V450.5H948.4V453H951V454ZM953 454V441H958V454ZM961 454V444.5H964.1V444H967.3V440H970.4V445H972V454ZM976.7 454V445H979.9V451.5H983V452.5H986.2V451.5H989.3V452.5H992.5V454ZM998.7 454V453H1001.9V453.5H1005V452.5H1008.2V454ZM1011.3 454V452H1014.5V454ZM1020.8 454V452H1027V454ZM1030.2 454V452H1033.3V453H1036.5V454ZM1042.8 454V452.5H1045.9V453.5H1049.1V454ZM1064.8 454V453.5H1067.9V454ZM1071.1 454V453.5H1074.2V454ZM1171 454V432H1175.5V454ZM1320 454V443H1323.5V454ZM1338 454V434H1342.5V454ZM1360.4 454V452H1363.6V454ZM1417 454V453H1420.2V454ZM1473.6 454V447H1475V454Z"/>
<path fill="#f46d43" d="M808 454V452H812.5V454ZM1171 454V432H1175.5V454Z"/>
<path fill="#d73027" d="M1171 454V436.5H1175.5V454Z"/>
<rect x="649" y="432" width="4.5" height="22" fill="#abd9e9"/>
<rect x="649" y="432" width="4.5" height="18.7" fill="#74add1"/>
<rect x="866" y="432" width="4.4" height="22" fill="#abd9e9"/>
<rect x="866" y="432" width="4.4" height="22" fill="#74add1"/>
<rect x="866" y="432" width="4.4" height="7.7" fill="#4575b4"/>
<rect x="580" y="430.4" width="895" height="1" fill="#d3dbea"/>
<path fill="#fee090" d="M584 481.5V459.5H648V481.5ZM656 481.5V460H662.2V461H665V465H668V472.5H672V459.5H678V481.5ZM678 481.5V467H685V471.5H687.4V472H690.5V470.5H693.7V468H695V469.5H700V481.5ZM700 481.5V473.5H703.1V472.5H706.3V474H709.4V474.5H712.5V473H720V475H722V474.5H725.1V475H728.3V475.5H734.6V474.5H737.7V475H740V474H745V476.5H750.3V477.5H756.6V476H759.7V476.5H762.9V474.5H766V476.5H772.3V477.5H778.6V476.5H784.9V475.5H788V476H794.3V477H797.5V478H800V479H800.6V477.5H803.8V478H810V476H813.2V478H816.3V478.5H822.6V477.5H828.9V478H830V480H832.1V479.5H835.2V480H850V481H866V481.5ZM882 481.5V478H886V481H920V480.5H950V477.5H955V477H957.9V477.5H961V478H964.1V477.5H970.4V478H973.6V478.5H975V477H976.7V475H979.9V476H983V475H986.2V477H989.3V474.5H992.5V475H995.6V473.5H1000V475H1008.2V476.5H1011.3V475.5H1014.5V476H1017.6V476.5H1020.8V474.5H1023.9V475H1027V475.5H1030.2V475H1033.3V476H1036.5V476.5H1039.6V477H1042.8V475H1045.9V475.5H1052.2V478H1055.3V476H1058.5V477.5H1060V476H1061.6V476.5H1064.8V474.5H1067.9V475.5H1071.1V474.5H1074.2V475H1075V471.5H1077.4V472H1080.5V473H1083.7V473.5H1085V472.5H1086.8V469H1089.9V470.5H1100V468.5H1105V463H1109.5V470.5H1115V462H1115.1V463.5H1118.2V461.5H1121.4V463H1124.5V465.5H1125V462.5H1127.7V463H1130.8V459.5H1150V481.5ZM1152 481.5V459.5H1200V481.5ZM1200 481.5V459.5H1302.5V461H1303.8V464H1307V459.5H1347.8V462H1351V459.5H1354.1V460.5H1356V459.5H1381V481.5ZM1383 481.5V459.5H1473.6V460.5H1475V481.5Z"/>
<path fill="#fdae61" d="M584 481.5V465H590V459.5H595V466H600V460.5H606V467H610V464H611.9V459.5H615.1V461H618.2V465H620V468.5H625V460.5H632V466H636V463H637.1V460H640.2V464H643.4V478.5H646.5V459.5H648V481.5ZM672 481.5V480.5H678V481.5ZM1130.8 481.5V480.5H1134V473H1136V477H1140V480.5H1146V459.5H1150V481.5ZM1152 481.5V477H1152.8V471H1156V474H1159.1V474.5H1160V469H1165.4V459.5H1172.5V472.5H1175V459.5H1200V481.5ZM1200 481.5V459.5H1260.5V474.5H1262.9V470.5H1266.1V469H1269.2V470.5H1270V478H1272.4V477H1275.5V479.5H1278.6V481H1281V481.5ZM1284.9 481.5V474.5H1288.1V476.5H1291.2V478.5H1294.4V475.5H1296V468.5H1302.5V481.5ZM1307 481.5V481H1310V476H1310.1V475.5H1316.4V477H1319.5V467.5H1322.7V479H1325.8V475.5H1326V479.5H1329V479H1332.1V479.5H1335.3V480H1338.4V481H1340V470.5H1346.5V479H1347.8V481.5ZM1351 481.5V480.5H1354.1V481.5ZM1356 481.5V476H1363.6V474H1364V465H1366.7V471H1369.8V473H1373V477H1377V468.5H1381V481.5ZM1383 481.5V459.5H1390V466H1395V459.5H1401.3V460H1404V459.5H1413.5V466.5H1413.9V467H1417V459.5H1432.8V460.5H1435.9V468.5H1436V479H1439V459.5H1442.2V469H1445V461.5H1452V467H1454.8V473.5H1457.9V464.5H1460V471.5H1461.1V472H1464.2V475.5H1467.3V474.5H1470.5V476H1473.6V481.5Z"/>
<path fill="#f46d43" d="M611.9 481.5V481H615.1V481.5ZM646.5 481.5V481H648V481.5ZM1146 481.5V459.5H1150V481.5ZM1165.4 481.5V478.5H1168V481.5ZM1175 481.5V459.5H1179.5V480H1181.2V476.5H1184.3V479.5H1187.4V478H1188V464.5H1190.6V473H1193.7V475.5H1196.9V461H1200V481.5ZM1200 481.5V471.5H1203.2V474H1206.3V472H1209.5V469H1210V459.5H1216.5V478H1218.9V462H1222V464.5H1225.2V469H1228.3V464.5H1231V459.5H1236.5V477H1242V459.5H1247.2V464.5H1250.3V465H1253.5V464H1256V459.5H1260.5V481.5ZM1383 481.5V475H1390V481.5ZM1395 481.5V477H1398.2V481H1401.3V481.5ZM1404 481.5V475H1408V459.5H1413.5V481.5ZM1420.2 481.5V481H1423V459.5H1427.5V472H1429.6V478H1432.8V481.5ZM1439 481.5V476.5H1442.2V481.5Z"/>
<path fill="#d73027" d="M1175 481.5V470.5H1179.5V481.5ZM1210 481.5V461.5H1216.5V481.5ZM1231 481.5V464H1236.5V481.5ZM1242 481.5V481H1244.1V471H1247.2V481.5ZM1256 481.5V466H1260.5V481.5ZM1423 481.5V475H1427.5V481.5Z"/>
<rect x="649" y="459.5" width="4.5" height="22" fill="#abd9e9"/>
<rect x="649" y="459.5" width="4.5" height="22" fill="#74add1"/>
<rect x="866" y="459.5" width="4" height="2.2" fill="#abd9e9"/>
<rect x="580" y="457.9" width="895" height="1" fill="#d3dbea"/>
<path fill="#fee090" d="M584 509V508H586.7V507.5H589.9V507H596V502.5H599.5V507H602.5V506.5H605.6V506H608.8V506.5H611.9V505.5H618.2V506H624.5V504.5H630.8V505H633V502.5H640V507H643V496H647.5V509ZM656 509V503.5H659.1V501.5H662.2V502.5H665.4V502H668.5V501.5H672V488H678V509ZM678 509V498.5H687.4V499.5H690.5V498H692V489H697V498H700V509ZM700 509V502.5H702V487H706V488H713V487H716V488H718.5V509ZM720 509V487H725V509ZM728 509V492.5H735V488H738V487H742V487.5H744V489H747.1V487H750.3V489.5H753.4V491.5H755V497H756.6V490.5H759.7V494H762.9V494.5H765V487.5H766V488H769.2V487.5H772.3V489H775V487H810.5V509ZM813 509V487H838.3V487.5H844.6V487H850V493.5H850.9V493H857.2V497.5H858V488H864V509ZM870 509V487H876.5V509ZM880 509V498H882V487H886.5V498H888.7V495H891.8V496H895V509ZM895 509V496H898.1V499H901.2V498.5H904.4V500H907.5V500.5H910.7V496H913.8V495.5H917V509ZM920 509V494.5H924.5V505H926.4V505.5H929.5V506H932.7V505H935.8V505.5H948.4V506H950V506.5H951.6V507H954.7V506.5H957.9V506H961V507H964.1V506.5H970V505H975V507.5H976.7V508H979.9V507H983V507.5H995.6V508H998.7V507.5H1000V505.5H1005V509ZM1005 509V507.5H1040V508H1058.5V508.5H1064.8V508H1074.2V508.5H1077.4V508H1080.5V508.5H1086.8V508H1089.9V508.5H1093.1V508H1099.4V507.5H1102.5V508H1121.4V507.5H1124.5V508H1127.7V508.5H1130.8V508H1146.6V508.5H1152.8V508H1171.7V508.5H1174.9V508H1190.6V508.5H1196.9V508H1212.6V508.5H1218.9V508H1237.8V508.5H1240.9V508H1250V507.5H1262.9V507H1275.5V506.5H1278.6V507H1281.8V507.5H1284.9V506.5H1300V506H1307V505.5H1322.7V506H1325.8V506.5H1329V505H1341.5V505.5H1344.7V506H1351V504.5H1360.4V505H1366.7V505.5H1370V506.5H1373V505.5H1376.1V506H1379.3V505.5H1385.6V506H1391.9V506.5H1395V505.5H1400V507H1417V506.5H1420.2V507H1426.5V506.5H1432.8V507H1435.9V507.5H1439V506.5H1442.2V507H1457.9V507.5H1461.1V506.5H1464.2V507H1467.3V506.5H1470.5V507H1473.6V506H1475V509Z"/>
<path fill="#fdae61" d="M702 509V507H706V509ZM713 509V507H716V509ZM720 509V503.5H725V509ZM738 509V507H742V509ZM747.1 509V506.5H750.3V509ZM775 509V499.5H775.4V501H778.6V497H781.7V499H784.9V496.5H790V491.5H796V487H802.5V509ZM806 509V487H810.5V509ZM813 509V487H820.5V498.5H822.6V492H825.8V503H828.9V493.5H830V494.5H832.1V494H835.2V496.5H838V506.5H838.3V509ZM844.6 509V505.5H850V509ZM882 509V498H886.5V509Z"/>
<path fill="#f46d43" d="M796 509V487H802.5V509ZM806 509V487H810.5V509ZM813 509V487H820.5V509Z"/>
<path fill="#d73027" d="M796 509V491.5H802.5V509ZM806 509V500H810.5V509ZM813 509V491H813.2V488.5H816.3V502.5H819.5V499.5H820.5V509Z"/>
<rect x="650" y="487" width="3.5" height="19.8" fill="#abd9e9"/>
<rect x="866" y="487" width="4.4" height="22" fill="#abd9e9"/>
<rect x="866" y="487" width="4.4" height="22" fill="#74add1"/>
<rect x="866" y="487" width="4.4" height="13.2" fill="#4575b4"/>
<rect x="580" y="485.4" width="895" height="1" fill="#d3dbea"/>
<path fill="#fee090" d="M584 536.5V535.5H589.9V534.5H595V531H596.2V532H599.3V532.5H602.5V531H605V524.5H610V528.5H611.9V529H618V514.5H622.5V527.5H628V526H630.8V525.5H633.9V526H637.1V526.5H640V525.5H645V520H648V536.5ZM656 536.5V532H660V514.5H688.5V536.5ZM690 536.5V514.5H740.5V536.5ZM745 536.5V514.5H763V536.5ZM768 536.5V514.5H781.5V536.5ZM784 536.5V514.5H818.5V536.5ZM820 536.5V516.5H822.6V514.5H835V516.5H838V536.5ZM842 536.5V520H844.6V517.5H850.9V516H854.1V515.5H857.2V518H860V521H864V536.5ZM870 536.5V520.5H872.9V521H876.1V519H879.2V521H882.4V524H885.5V525H888.7V522H891.8V523.5H898.1V523H901.2V522H904.4V524H907.5V524.5H910.7V521H913.8V522.5H917V520.5H920.1V522H923.3V521H926.4V523.5H929.5V524.5H930V536.5ZM933 536.5V514.5H937V524H942.1V524.5H946.5V536.5ZM952 536.5V514.5H957V525.5H961.5V536.5ZM965 536.5V514.5H968.5V536.5ZM970 536.5V514.5H975V523H976.7V514.5H979.9V516H983V514.5H997V524H998.7V514.5H1011.5V536.5ZM1015 536.5V514.5H1023.9V517H1027V514.5H1049.1V515.5H1052.2V514.5H1055.3V516.5H1056V514.5H1062V523H1064.8V516.5H1067.9V517.5H1070V536.5ZM1074 536.5V514.5H1079V515.5H1080.5V519H1086.8V514.5H1087.5V536.5ZM1090 536.5V522H1093.1V521H1096.2V519H1099.4V517H1102.5V517.5H1105V514.5H1110V526.5H1115V522H1115.1V517.5H1118.2V521H1121.4V520H1124.5V524H1125V514.5H1130.5V536.5ZM1134 536.5V514.5H1138.5V536.5ZM1140 536.5V514.5H1144.5V536.5ZM1147 536.5V516.5H1153V527H1165.4V527.5H1168.6V528.5H1171V521H1176V529.5H1178V530H1181.2V530.5H1184.3V530H1187V515.5H1192V529.5H1193.7V530H1196.9V527.5H1200V528.5H1201V536.5ZM1203 536.5V524.5H1206.5V536.5ZM1210 536.5V527.5H1212.6V529.5H1218.9V527.5H1225.2V527H1226V536.5ZM1229 536.5V523.5H1235V536.5ZM1238 536.5V534H1240.9V532H1244.1V532.5H1250.3V533H1256V536.5ZM1263 536.5V524.5H1268V536.5ZM1270 536.5V533H1272.4V533.5H1278.6V534.5H1284.9V534H1294.4V534.5H1303.8V535.5H1305V536.5ZM1312 536.5V531.5H1313.2V532H1320V536.5ZM1323 536.5V535.5H1329V535H1331V536.5ZM1335 536.5V532.5H1335.3V534H1338.4V532.5H1341.5V532H1344.7V533.5H1345V536.5ZM1348 536.5V535.5H1353V533H1358V536.5ZM1360 536.5V534.5H1360.4V534H1366.7V534.5H1370V536.5ZM1372 536.5V535H1373V534.5H1381V536.5ZM1388 536.5V532H1393V536.5ZM1398 536.5V534.5H1402V536.5ZM1407 536.5V526.5H1413V535.5H1420V536.5ZM1423 536.5V530H1427V536.5ZM1430 536.5V533.5H1432.8V534H1435.9V535H1439V534H1442.2V533.5H1445V536.5ZM1452 536.5V533H1454.8V534H1457.9V534.5H1460V536.5ZM1465 536.5V533H1470V536.5Z"/>
<path fill="#fdae61" d="M618 536.5V532H622.5V536.5ZM660 536.5V524.5H664V534.5H668V526.5H675V516.5H680V525.5H685V520H688.5V536.5ZM690 536.5V518H695V528H696.8V514.5H700V524H703.1V523.5H706.3V530H709.4V533H710V536.5ZM715 536.5V514.5H720V521H725.1V522.5H728.3V527.5H731.4V526H734.6V517.5H735V514.5H740.5V536.5ZM745 536.5V522.5H747.1V514.5H750.3V526H753.4V529H755V523H756.6V514.5H763V536.5ZM768 536.5V514.5H781.5V536.5ZM784 536.5V528H784.9V528.5H788V532H791.2V527.5H794.3V528.5H795V525.5H800V531H800.6V524H803.8V527H808V536.5ZM813 536.5V514.5H818.5V536.5ZM822.6 536.5V530H825.8V532H828.9V534.5H830V530H835V536.5ZM933 536.5V530H937V536.5ZM952 536.5V514.5H957V536.5ZM965 536.5V535.5H968.5V536.5ZM970 536.5V514.5H975V536.5ZM976.7 536.5V534.5H979.9V536.5ZM983 536.5V532H986.2V531H989.3V535.5H992V514.5H997V536.5ZM998.7 536.5V529H1001.9V535.5H1007V514.5H1011.5V536.5ZM1015 536.5V519H1022V536.5ZM1027 536.5V535H1030.2V533.5H1033.3V528.5H1035V523.5H1036.5V533H1039.6V533.5H1042.8V528.5H1045V534.5H1045.9V535.5H1049.1V536.5ZM1056 536.5V524.5H1062V536.5ZM1074 536.5V523.5H1079V536.5ZM1086.8 536.5V535H1087.5V536.5ZM1105 536.5V527.5H1110V536.5ZM1134 536.5V533H1138.5V536.5ZM1140 536.5V527.5H1144.5V536.5Z"/>
<path fill="#f46d43" d="M696.8 536.5V536H700V536.5ZM735 536.5V527.5H740.5V536.5ZM747.1 536.5V535H750.3V536.5ZM756.6 536.5V529.5H759.7V533H762.9V525H763V536.5ZM768 536.5V514.5H781.5V536.5ZM952 536.5V530H957V536.5ZM970 536.5V514.5H975V536.5ZM992 536.5V527.5H997V536.5ZM1007 536.5V527.5H1011.5V536.5Z"/>
<path fill="#d73027" d="M768 536.5V521H775V531H781.5V536.5ZM970 536.5V525.5H975V536.5Z"/>
<rect x="649" y="514.5" width="4.5" height="22" fill="#abd9e9"/>
<rect x="649" y="514.5" width="4.5" height="4.4" fill="#74add1"/>
<rect x="866" y="514.5" width="4.4" height="22" fill="#abd9e9"/>
<rect x="866" y="514.5" width="4.4" height="11" fill="#74add1"/>
<rect x="580" y="512.9" width="895" height="1" fill="#d3dbea"/></svg>
<div class="b" style="left:1474.50px;top:100.00px;width:1.00px;height:444.00px;background:#e6e6e6"></div>
<div class="b" style="left:1475.50px;top:100.00px;width:13.00px;height:443.50px;background:#fdfdfd"></div>
<div class="b" style="left:1488.30px;top:100.00px;width:1.00px;height:455.00px;background:#ececec"></div>
<div class="b" style="left:578.00px;top:543.50px;width:910.50px;height:11.50px;background:#f8f8f8"></div>
<div class="b" style="left:578.00px;top:555.00px;width:911.00px;height:1.00px;background:#ececec"></div>
<div class="b" style="left:1478.00px;top:105.00px;width:8.00px;height:274.00px;background:#b9b9b9;border-radius:4px"></div>
<div class="b" style="left:582.50px;top:545.00px;width:873.50px;height:8.00px;background:#b9b9b9;border-radius:4px"></div>
<div class="b" style="left:1018.00px;top:574.60px;width:32.00px;height:1.00px;background:#d9d9d9"></div>
<div class="b" style="left:1018.00px;top:577.60px;width:32.00px;height:1.00px;background:#d9d9d9"></div>
<svg class="b" style="left:581.00px;top:602.30px;" width="8.80" height="5.60" viewBox="0 0 8.8 5.6"><path d="M.6 .6L4.400 4.800 8.200 .6" fill="none" stroke="#444" stroke-width="1.100"/></svg>
<div class="b" style="left:580.00px;top:671.00px;width:908.00px;height:1.00px;background:#e6e6e6"></div>
<div class="b" style="left:598.00px;top:670.00px;width:79.00px;height:2.00px;background:#32346e"></div>
<div class="b" style="left:1178.40px;top:644.00px;width:121.30px;height:18.00px;background:#f0f0f0;border:none;border-radius:9.0px"></div>
<div class="b" style="left:1308.00px;top:644.00px;width:27.60px;height:18.50px;background:#e5f3f7;border-radius:3px"></div>
<svg class="b" style="left:1316.50px;top:647.50px;" width="10.50" height="11.50" viewBox="0 0 10.5 11.5"><rect x=".3" y="1.300" width="6.400" height="8.200" fill="#1a85a0"/><rect x="2.200" y=".2" width="2.600" height="1.800" fill="#1a85a0"/><path d="M4.600 4.300h3l2.300 2.300v4.400H4.600z" fill="#fff" stroke="#1a85a0" stroke-width=".9"/></svg>
<div class="b" style="left:1344.50px;top:640.00px;width:143.00px;height:26.00px;background:#fff;border:1px solid #e0e0e0;border-radius:3px"></div>
<svg class="b" style="left:645.00px;top:687.60px;" width="4.60" height="8.60" viewBox="0 0 4.6 8.6"><path d="M.3 3.400L2.300 .6 4.300 3.400z" fill="#cfcfcf"/><path d="M.3 5.200L2.300 8 4.300 5.200z" fill="#cfcfcf"/></svg>
<svg class="b" style="left:919.00px;top:687.60px;" width="4.60" height="8.60" viewBox="0 0 4.6 8.6"><path d="M.3 3.400L2.300 .6 4.300 3.400z" fill="#cfcfcf"/><path d="M.3 5.200L2.300 8 4.300 5.200z" fill="#cfcfcf"/></svg>
<svg class="b" style="left:1260.50px;top:687.60px;" width="4.60" height="8.60" viewBox="0 0 4.6 8.6"><path d="M.3 3.400L2.300 .6 4.300 3.400z" fill="#cfcfcf"/><path d="M.3 5.200L2.300 8 4.300 5.200z" fill="#cfcfcf"/></svg>
<div class="b" style="left:580.00px;top:732.20px;width:892.00px;height:1.00px;background:#e2e2e2"></div>
<div class="b" style="left:580.00px;top:757.20px;width:892.00px;height:1.00px;background:#e2e2e2"></div>
<div class="b" style="left:580.00px;top:782.20px;width:892.00px;height:1.00px;background:#e2e2e2"></div>
<div class="b" style="left:580.00px;top:807.20px;width:892.00px;height:1.00px;background:#e2e2e2"></div>
<div class="b" style="left:580.00px;top:832.20px;width:892.00px;height:1.00px;background:#e2e2e2"></div>
<div class="b" style="left:580.00px;top:857.20px;width:892.00px;height:1.00px;background:#e2e2e2"></div>
<div class="b" style="left:580.00px;top:882.20px;width:892.00px;height:1.00px;background:#e2e2e2"></div>
<div class="b" style="left:580.00px;top:907.20px;width:892.00px;height:1.00px;background:#e2e2e2"></div>
<div class="b" style="left:580.00px;top:932.20px;width:892.00px;height:1.00px;background:#e2e2e2"></div>
<div class="b" style="left:580.00px;top:957.20px;width:892.00px;height:1.00px;background:#e2e2e2"></div>
<div class="b" style="left:1473.50px;top:672.00px;width:1.00px;height:272.00px;background:#ececec"></div>
<div class="b" style="left:1474.50px;top:672.00px;width:13.00px;height:272.00px;background:#fafafa"></div>
<div class="b" style="left:1487.50px;top:672.00px;width:1.00px;height:272.00px;background:#ececec"></div>
<div class="b" style="left:1477.50px;top:676.00px;width:7.60px;height:162.00px;background:#b9b9b9;border-radius:4px"></div>
<div class="b" style="left:1502.00px;top:44.00px;width:1.00px;height:900.00px;background:#ececec"></div>
<div class="b" style="left:1503.00px;top:44.00px;width:19.00px;height:900.00px;background:#fbfbfb"></div>
<div class="b" style="left:1516.50px;top:44.00px;width:1.00px;height:900.00px;background:#f0f0f0"></div>
<div class="b" style="left:1506.20px;top:47.00px;width:7.80px;height:905.00px;background:#c0c0c0;border-radius:4px"></div>
<svg class="b" style="left:997.50px;top:632.80px;" width="9.00" height="15.00" viewBox="0 0 9 15"><path d="M.5 .5V10.200L2.800 8.200 5.200 13.700 6.900 12.900 4.600 7.600H7.900Z" fill="#000"/></svg>
</div><div id="root">
<span class="t" style="left:54.30px;top:10.79px;font-size:18.20px;color:#484848;font-weight:700;letter-spacing:-0.841px;">Superset</span>
<span class="t" style="left:150.00px;top:13.63px;font-size:12.60px;color:#484848;letter-spacing:-0.039px;">Data</span>
<span class="t" style="left:214.00px;top:13.63px;font-size:12.60px;color:#484848;letter-spacing:0.298px;">Charts</span>
<span class="t" style="left:282.50px;top:13.63px;font-size:12.60px;color:#484848;letter-spacing:0.284px;">Dashboards</span>
<span class="t" style="left:382.50px;top:13.63px;font-size:12.60px;color:#484848;letter-spacing:0.039px;">SQL Lab</span>
<span class="t" style="left:1450.40px;top:13.63px;font-size:12.60px;color:#484848;letter-spacing:0.367px;">Settings</span>
<span class="t" style="left:5.50px;top:53.63px;font-size:12.60px;color:#444;letter-spacing:0.346px;">Dataset</span>
<span class="t" style="left:82.50px;top:93.70px;font-size:12.40px;color:#333;letter-spacing:0.325px;">covid19.cases_ts</span>
<span class="t" style="left:23.00px;top:140.13px;font-size:12.60px;color:#b9b9b9;letter-spacing:0.254px;">Search Metrics &amp; Columns</span>
<span class="t" style="left:5.50px;top:189.64px;font-size:14.60px;color:#333;letter-spacing:0.492px;">Metrics</span>
<span class="t" style="left:5.50px;top:210.03px;font-size:10.60px;color:#bcbcbc;letter-spacing:0.413px;">Showing 9 of 9</span>
<span class="t" style="left:40.00px;top:234.93px;font-size:12.60px;color:#333;letter-spacing:0.430px;">#Confirmed</span>
<span class="t" style="left:17.00px;top:238.63px;font-size:10.00px;color:#bdbdbd;">ƒ</span>
<span class="t" style="left:40.00px;top:253.93px;font-size:12.60px;color:#333;letter-spacing:0.261px;">#Deaths</span>
<span class="t" style="left:17.00px;top:257.64px;font-size:10.00px;color:#bdbdbd;">ƒ</span>
<span class="t" style="left:40.00px;top:272.93px;font-size:12.60px;color:#333;letter-spacing:0.229px;">#Recovered</span>
<span class="t" style="left:17.00px;top:276.64px;font-size:10.00px;color:#bdbdbd;">ƒ</span>
<span class="t" style="left:40.00px;top:291.93px;font-size:12.60px;color:#333;letter-spacing:0.034px;">Recovered_Rate</span>
<span class="t" style="left:17.00px;top:295.64px;font-size:10.00px;color:#bdbdbd;">ƒ</span>
<span class="t" style="left:40.00px;top:310.93px;font-size:12.60px;color:#333;letter-spacing:0.259px;">#NewCases</span>
<span class="t" style="left:17.00px;top:314.64px;font-size:10.00px;color:#bdbdbd;">ƒ</span>
<span class="t" style="left:40.00px;top:329.93px;font-size:12.60px;color:#333;letter-spacing:0.355px;">#CurrentCases</span>
<span class="t" style="left:17.00px;top:333.64px;font-size:10.00px;color:#bdbdbd;">ƒ</span>
<span class="t" style="left:40.00px;top:348.93px;font-size:12.60px;color:#333;letter-spacing:-0.037px;">CasesUS</span>
<span class="t" style="left:17.00px;top:352.64px;font-size:10.00px;color:#bdbdbd;">ƒ</span>
<span class="t" style="left:40.00px;top:367.93px;font-size:12.60px;color:#333;letter-spacing:0.176px;">Cases Latam</span>
<span class="t" style="left:17.00px;top:371.64px;font-size:10.00px;color:#bdbdbd;">ƒ</span>
<span class="t" style="left:40.00px;top:386.93px;font-size:12.60px;color:#333;letter-spacing:0.392px;">OtherCountryNewCases</span>
<span class="t" style="left:17.00px;top:390.64px;font-size:10.00px;color:#bdbdbd;">ƒ</span>
<span class="t" style="left:5.50px;top:416.64px;font-size:14.60px;color:#333;letter-spacing:0.148px;">Columns</span>
<span class="t" style="left:5.50px;top:437.03px;font-size:10.60px;color:#bcbcbc;letter-spacing:0.272px;">Showing 13 of 13</span>
<span class="t" style="left:40.00px;top:462.13px;font-size:12.60px;color:#333;letter-spacing:0.371px;">recovered</span>
<span class="t" style="left:15.30px;top:462.85px;font-size:11.40px;color:#b3b3b3;">#</span>
<span class="t" style="left:40.00px;top:481.13px;font-size:12.60px;color:#333;letter-spacing:0.273px;">date_trunc</span>
<span class="t" style="left:40.00px;top:500.13px;font-size:12.60px;color:#333;letter-spacing:0.482px;">longitude</span>
<span class="t" style="left:15.30px;top:500.85px;font-size:11.40px;color:#b3b3b3;">#</span>
<span class="t" style="left:40.00px;top:519.13px;font-size:12.60px;color:#333;letter-spacing:0.481px;">latitude</span>
<span class="t" style="left:15.30px;top:519.85px;font-size:11.40px;color:#b3b3b3;">#</span>
<span class="t" style="left:40.00px;top:538.13px;font-size:12.60px;color:#333;letter-spacing:0.460px;">confirmed</span>
<span class="t" style="left:15.30px;top:538.85px;font-size:11.40px;color:#b3b3b3;">#</span>
<span class="t" style="left:40.00px;top:557.13px;font-size:12.60px;color:#333;letter-spacing:0.434px;">deaths</span>
<span class="t" style="left:15.30px;top:557.85px;font-size:11.40px;color:#b3b3b3;">#</span>
<span class="t" style="left:40.00px;top:576.13px;font-size:12.60px;color:#333;letter-spacing:0.339px;">province</span>
<span class="t" style="left:8.00px;top:577.67px;font-size:10.20px;color:#bdbdbd;letter-spacing:0.013px;">ABC</span>
<span class="t" style="left:40.00px;top:595.13px;font-size:12.60px;color:#333;letter-spacing:0.530px;">country</span>
<span class="t" style="left:8.00px;top:596.67px;font-size:10.20px;color:#bdbdbd;letter-spacing:0.013px;">ABC</span>
<span class="t" style="left:40.00px;top:614.13px;font-size:12.60px;color:#333;letter-spacing:-0.005px;">Ratio_Death</span>
<span class="t" style="left:17.00px;top:617.83px;font-size:10.00px;color:#bdbdbd;">ƒ</span>
<span class="t" style="left:5.50px;top:633.13px;font-size:12.60px;color:#333;letter-spacing:0.082px;">Ratio_Recovered</span>
<span class="t" style="left:40.00px;top:652.13px;font-size:12.60px;color:#333;letter-spacing:0.120px;">new_cases</span>
<span class="t" style="left:15.30px;top:652.85px;font-size:11.40px;color:#b3b3b3;">#</span>
<span class="t" style="left:40.00px;top:671.13px;font-size:12.60px;color:#333;letter-spacing:0.312px;">last_confirmed</span>
<span class="t" style="left:15.30px;top:671.85px;font-size:11.40px;color:#b3b3b3;">#</span>
<span class="t" style="left:40.00px;top:690.13px;font-size:12.60px;color:#333;letter-spacing:0.283px;">new_deaths</span>
<span class="t" style="left:15.30px;top:690.85px;font-size:11.40px;color:#b3b3b3;">#</span>
<span class="t" style="left:323.50px;top:57.92px;font-size:11.20px;color:#1a85a0;font-weight:700;letter-spacing:-0.883px;">RUN</span>
<span class="t" style="left:412.00px;top:57.92px;font-size:11.20px;color:#1a85a0;font-weight:700;letter-spacing:-0.556px;">SAVE</span>
<span class="t" style="left:312.00px;top:90.52px;font-size:11.20px;color:#333;letter-spacing:-0.303px;">DATA</span>
<span class="t" style="left:438.30px;top:90.52px;font-size:11.20px;color:#333;letter-spacing:-0.382px;">CUSTOMIZE</span>
<span class="t" style="left:282.00px;top:146.97px;font-size:14.80px;color:#333;letter-spacing:0.320px;">Chart Type</span>
<span class="t" style="left:282.00px;top:264.47px;font-size:14.80px;color:#333;letter-spacing:0.053px;">Time</span>
<span class="t" style="left:282.00px;top:433.47px;font-size:14.80px;color:#333;letter-spacing:-0.076px;">Query</span>
<span class="t" style="left:295.50px;top:189.77px;font-size:10.90px;color:#8b9095;letter-spacing:-0.162px;">VISUALIZATION TYPE</span>
<span class="t" style="left:305.00px;top:209.32px;font-size:11.20px;color:#333;letter-spacing:0.075px;">Horizon Chart</span>
<span class="t" style="left:295.50px;top:307.77px;font-size:10.90px;color:#8b9095;letter-spacing:-0.080px;">TIME COLUMN</span>
<span class="t" style="left:307.00px;top:331.16px;font-size:12.80px;color:#333;letter-spacing:0.223px;">date_trunc</span>
<span class="t" style="left:295.50px;top:369.77px;font-size:10.90px;color:#8b9095;letter-spacing:-0.370px;">TIME RANGE</span>
<span class="t" style="left:305px;top:389.19px;font-size:11px;color:#333;letter-spacing:.1px">-<span style="font-size:14px;line-height:0;vertical-align:-1px">∞</span> ≤ col &lt; <span style="font-size:14px;line-height:0;vertical-align:-1px">∞</span></span>
<span class="t" style="left:295.50px;top:476.77px;font-size:10.90px;color:#8b9095;letter-spacing:-0.425px;">METRICS</span>
<span class="t" style="left:326.00px;top:498.92px;font-size:12.50px;color:#333;font-style:italic;font-family:&quot;Liberation Serif&quot;,serif;">ƒ</span>
<span class="t" style="left:331.20px;top:502.44px;font-size:7.40px;color:#555;">(x)</span>
<span class="t" style="left:343.00px;top:500.48px;font-size:11.60px;color:#333;letter-spacing:-0.311px;">SUM(new_cases)</span>
<span class="t" style="left:295.50px;top:539.77px;font-size:10.90px;color:#8b9095;letter-spacing:-0.585px;">FILTERS</span>
<span class="t" style="left:326.00px;top:563.35px;font-size:11.40px;color:#bcbcbc;letter-spacing:0.168px;">Add filter</span>
<span class="t" style="left:295.50px;top:601.77px;font-size:10.90px;color:#8b9095;letter-spacing:-0.478px;">GROUP BY</span>
<span class="t" style="left:302.50px;top:624.18px;font-size:11.60px;color:#333;letter-spacing:0.077px;">country</span>
<span class="t" style="left:298.00px;top:651.69px;font-size:11.00px;color:#bcbcbc;letter-spacing:0.083px;">12 option(s)</span>
<span class="t" style="left:295.50px;top:682.77px;font-size:10.90px;color:#8b9095;letter-spacing:-0.397px;">SERIES LIMIT</span>
<span class="t" style="left:307.00px;top:707.36px;font-size:12.80px;color:#333;letter-spacing:-0.238px;">25</span>
<span class="t" style="left:428.00px;top:682.77px;font-size:10.90px;color:#8b9095;letter-spacing:-0.409px;">SORT BY</span>
<span class="t" style="left:459.00px;top:705.12px;font-size:12.50px;color:#333;font-style:italic;font-family:&quot;Liberation Serif&quot;,serif;">ƒ</span>
<span class="t" style="left:464.20px;top:708.64px;font-size:7.40px;color:#555;">(x)</span>
<span class="t" style="left:476.00px;top:706.68px;font-size:11.60px;color:#333;letter-spacing:-0.468px;">SUM(...</span>
<span class="t" style="left:316.00px;top:742.77px;font-size:10.90px;color:#8b9095;letter-spacing:-0.694px;">SORT</span>
<span class="t" style="left:295.50px;top:758.77px;font-size:10.90px;color:#8b9095;letter-spacing:-0.353px;">DESCENDING</span>
<span class="t" style="left:449.00px;top:745.77px;font-size:10.90px;color:#8b9095;letter-spacing:-0.178px;">CONTRIBUTION</span>
<span class="t" style="left:295.50px;top:789.77px;font-size:10.90px;color:#8b9095;letter-spacing:-0.253px;">ROW LIMIT</span>
<span class="t" style="left:307.00px;top:814.96px;font-size:12.80px;color:#333;letter-spacing:0.101px;">10000</span>
<span class="t" style="left:580.50px;top:61.38px;font-size:22.00px;color:#333;letter-spacing:0.398px;">New COVID19 cases by country - Top 25</span>
<span class="t" style="left:1059.80px;top:67.10px;font-size:10.40px;color:#fff;letter-spacing:0.491px;">Altered</span>
<span class="t" style="left:1117.70px;top:67.10px;font-size:10.40px;color:#333;letter-spacing:0.334px;">7.23k rows</span>
<span class="t" style="left:1195.00px;top:67.19px;font-size:11.00px;color:#fff;letter-spacing:0.349px;">00:00:05.49</span>
<span class="t" style="left:1359.40px;top:66.06px;font-size:10.80px;color:#666;letter-spacing:-0.301px;">.JSON</span>
<span class="t" style="left:1422.50px;top:66.06px;font-size:10.80px;color:#666;letter-spacing:-0.503px;">.CSV</span>
<span class="t lbl" style="left:579.80px;top:104.31px;font-size:10.50px;color:#333;letter-spacing:.07px;">Argentina</span>
<span class="t lbl" style="left:579.80px;top:131.81px;font-size:10.50px;color:#333;letter-spacing:.07px;">Bangladesh</span>
<span class="t lbl" style="left:579.80px;top:159.31px;font-size:10.50px;color:#333;letter-spacing:.07px;">Brazil</span>
<span class="t lbl" style="left:579.80px;top:186.81px;font-size:10.50px;color:#333;letter-spacing:.07px;">Chile</span>
<span class="t lbl" style="left:579.80px;top:214.31px;font-size:10.50px;color:#333;letter-spacing:.07px;">Colombia</span>
<span class="t lbl" style="left:579.80px;top:241.81px;font-size:10.50px;color:#333;letter-spacing:.07px;">France</span>
<span class="t lbl" style="left:579.80px;top:269.31px;font-size:10.50px;color:#333;letter-spacing:.07px;">Germany</span>
<span class="t lbl" style="left:579.80px;top:296.81px;font-size:10.50px;color:#333;letter-spacing:.07px;">India</span>
<span class="t lbl" style="left:579.80px;top:324.31px;font-size:10.50px;color:#333;letter-spacing:.07px;">Indonesia</span>
<span class="t lbl" style="left:579.80px;top:351.81px;font-size:10.50px;color:#333;letter-spacing:.07px;">Iran</span>
<span class="t lbl" style="left:579.80px;top:379.31px;font-size:10.50px;color:#333;letter-spacing:.07px;">Iraq</span>
<span class="t lbl" style="left:579.80px;top:406.81px;font-size:10.50px;color:#333;letter-spacing:.07px;">Italy</span>
<span class="t lbl" style="left:579.80px;top:434.31px;font-size:10.50px;color:#333;letter-spacing:.07px;">Mexico</span>
<span class="t lbl" style="left:579.80px;top:461.81px;font-size:10.50px;color:#333;letter-spacing:.07px;">Netherlands</span>
<span class="t lbl" style="left:579.80px;top:489.31px;font-size:10.50px;color:#333;letter-spacing:.07px;">Pakistan</span>
<span class="t lbl" style="left:579.80px;top:516.81px;font-size:10.50px;color:#333;letter-spacing:.07px;">Peru</span>
<span class="t" style="left:602.50px;top:597.93px;font-size:12.60px;color:#333;font-weight:700;letter-spacing:0.063px;">Data</span>
<span class="t" style="left:598.80px;top:646.52px;font-size:11.20px;color:#333;letter-spacing:-0.488px;">VIEW RESULTS</span>
<span class="t" style="left:705.50px;top:646.52px;font-size:11.20px;color:#333;letter-spacing:-0.513px;">VIEW SAMPLES</span>
<span class="t" style="left:1188.00px;top:647.36px;font-size:10.80px;color:#333;letter-spacing:0.250px;">7.23k rows retrieved</span>
<span class="t" style="left:1353.60px;top:647.72px;font-size:11.20px;color:#b5b5b5;letter-spacing:-0.118px;">Search</span>
<span class="t" style="left:595.00px;top:683.52px;font-size:11.20px;color:#222;font-weight:700;letter-spacing:-0.012px;">country</span>
<span class="t" style="left:844.00px;top:683.52px;font-size:11.20px;color:#222;font-weight:700;letter-spacing:-0.198px;">__timestamp</span>
<span class="t" style="left:1159.50px;top:683.52px;font-size:11.20px;color:#222;font-weight:700;letter-spacing:0.076px;">SUM(new_cases)</span>
<span class="t" style="left:595.00px;top:713.99px;font-size:11.00px;color:#333;letter-spacing:.08px;">Iraq</span>
<span class="t" style="left:844.00px;top:713.99px;font-size:11.00px;color:#333;letter-spacing:.56px;">2020-06-03 00:00:00</span>
<span class="t" style="left:1159.50px;top:713.99px;font-size:11.00px;color:#333;letter-spacing:.3px;">519</span>
<span class="t" style="left:595.00px;top:738.99px;font-size:11.00px;color:#333;letter-spacing:.08px;">Russia</span>
<span class="t" style="left:844.00px;top:738.99px;font-size:11.00px;color:#333;letter-spacing:.56px;">2021-01-01 00:00:00</span>
<span class="t" style="left:1159.50px;top:738.99px;font-size:11.00px;color:#333;letter-spacing:.3px;">26613</span>
<span class="t" style="left:595.00px;top:763.99px;font-size:11.00px;color:#333;letter-spacing:.08px;">Colombia</span>
<span class="t" style="left:844.00px;top:763.99px;font-size:11.00px;color:#333;letter-spacing:.56px;">2020-06-21 00:00:00</span>
<span class="t" style="left:1159.50px;top:763.99px;font-size:11.00px;color:#333;letter-spacing:.3px;">3067</span>
<span class="t" style="left:595.00px;top:788.99px;font-size:11.00px;color:#333;letter-spacing:.08px;">Bangladesh</span>
<span class="t" style="left:844.00px;top:788.99px;font-size:11.00px;color:#333;letter-spacing:.56px;">2020-11-17 00:00:00</span>
<span class="t" style="left:1159.50px;top:788.99px;font-size:11.00px;color:#333;letter-spacing:.3px;">2212</span>
<span class="t" style="left:595.00px;top:813.99px;font-size:11.00px;color:#333;letter-spacing:.08px;">Italy</span>
<span class="t" style="left:844.00px;top:813.99px;font-size:11.00px;color:#333;letter-spacing:.56px;">2020-07-15 00:00:00</span>
<span class="t" style="left:1159.50px;top:813.99px;font-size:11.00px;color:#333;letter-spacing:.3px;">114</span>
<span class="t" style="left:595.00px;top:838.99px;font-size:11.00px;color:#333;letter-spacing:.08px;">Russia</span>
<span class="t" style="left:844.00px;top:838.99px;font-size:11.00px;color:#333;letter-spacing:.56px;">2020-09-15 00:00:00</span>
<span class="t" style="left:1159.50px;top:838.99px;font-size:11.00px;color:#333;letter-spacing:.3px;">5414</span>
<span class="t" style="left:595.00px;top:863.99px;font-size:11.00px;color:#333;letter-spacing:.08px;">Germany</span>
<span class="t" style="left:844.00px;top:863.99px;font-size:11.00px;color:#333;letter-spacing:.56px;">2020-06-12 00:00:00</span>
<span class="t" style="left:1159.50px;top:863.99px;font-size:11.00px;color:#333;letter-spacing:.3px;">169</span>
<span class="t" style="left:595.00px;top:888.99px;font-size:11.00px;color:#333;letter-spacing:.08px;">Iraq</span>
<span class="t" style="left:844.00px;top:888.99px;font-size:11.00px;color:#333;letter-spacing:.56px;">2020-12-06 00:00:00</span>
<span class="t" style="left:1159.50px;top:888.99px;font-size:11.00px;color:#333;letter-spacing:.3px;">1680</span>
<span class="t" style="left:595.00px;top:913.99px;font-size:11.00px;color:#333;letter-spacing:.08px;">Bangladesh</span>
<span class="t" style="left:844.00px;top:913.99px;font-size:11.00px;color:#333;letter-spacing:.56px;">2020-06-07 00:00:00</span>
<span class="t" style="left:1159.50px;top:913.99px;font-size:11.00px;color:#333;letter-spacing:.3px;">2635</span>
<span class="t" style="left:595.00px;top:938.99px;font-size:11.00px;color:#333;letter-spacing:.08px;">Italy</span>
<span class="t" style="left:844.00px;top:938.99px;font-size:11.00px;color:#333;letter-spacing:.56px;">2020-04-02 00:00:00</span>
<span class="t" style="left:1159.50px;top:938.99px;font-size:11.00px;color:#333;letter-spacing:.3px;">4668</span>
</div></body></html>
